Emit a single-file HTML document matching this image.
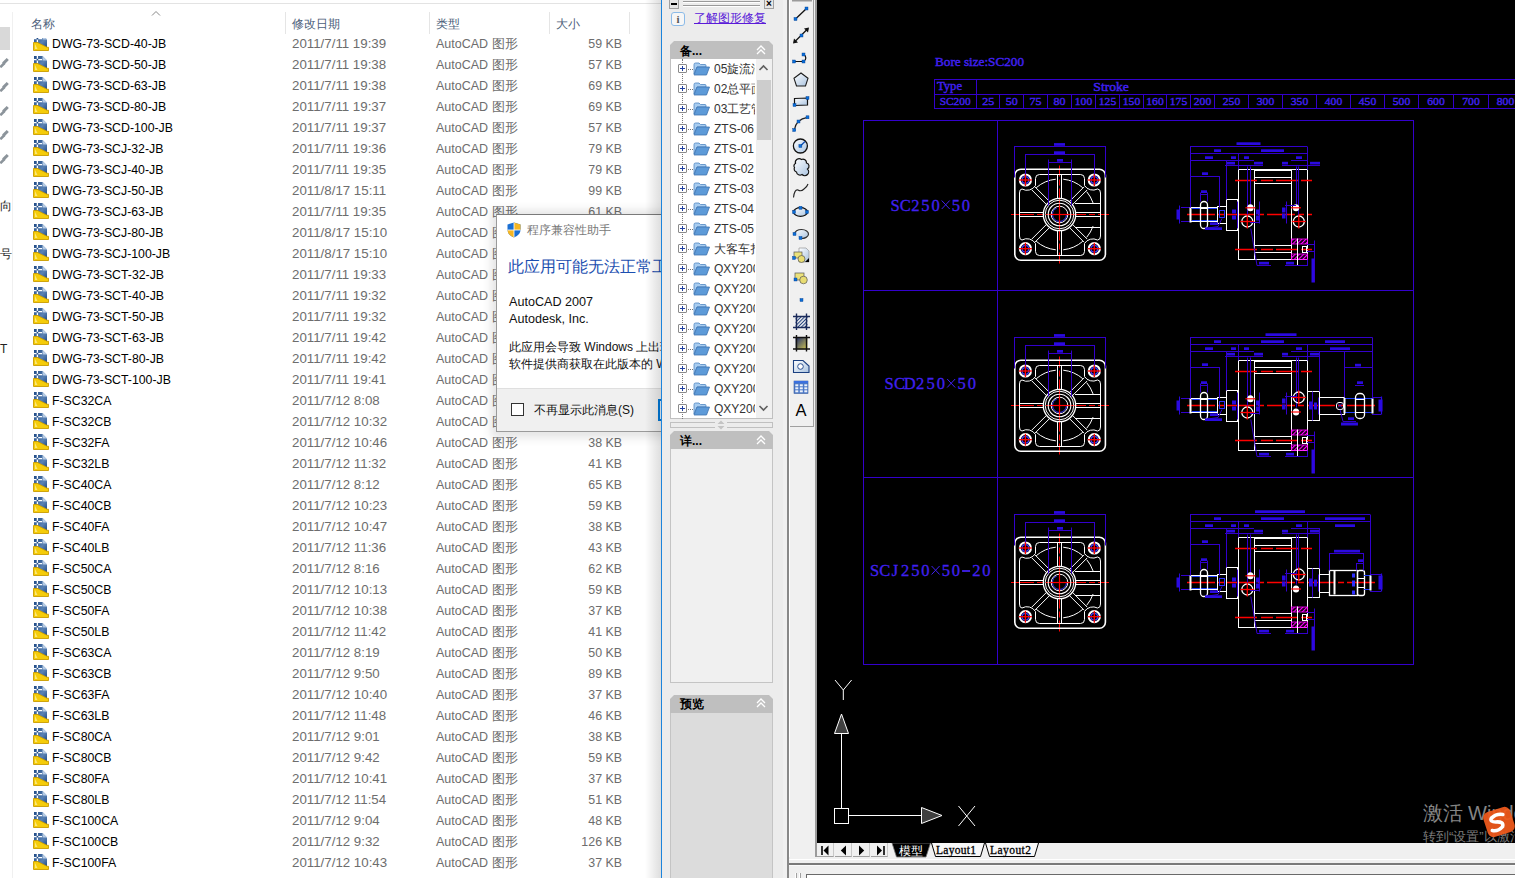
<!DOCTYPE html>
<html><head><meta charset="utf-8"><title>AutoCAD</title>
<style>
*{margin:0;padding:0;box-sizing:border-box}
html,body{width:1515px;height:878px;overflow:hidden;background:#fff;font-family:"Liberation Sans",sans-serif}
.a{position:absolute}
.row{position:absolute;left:0;width:661px;height:21px;font-size:12.3px;line-height:21px;white-space:nowrap}
.row .n{position:absolute;left:52px;color:#000}
.row .d{position:absolute;top:-1px;left:292px;color:#6d6d6d;font-size:13.3px}
.row .t{position:absolute;top:-0.5px;left:436px;color:#6d6d6d;font-size:12.5px}
.row .s{position:absolute;top:-0.5px;right:39px;color:#6d6d6d;font-size:12.4px}
.row svg{position:absolute;left:33px;top:1px}
.hdr{position:absolute;top:16px;font-size:12.3px;color:#4c607a}
.tree{position:absolute;left:671px;width:85px;height:20px;font-size:12px;line-height:20px;color:#333;white-space:nowrap;overflow:hidden}
.tb{position:absolute;left:792px;width:18px;height:18px}
</style></head><body>
<div class="a" style="left:0;top:0;width:661px;height:878px;background:#fff;overflow:hidden"><div class="a" style="left:0;top:3px;width:661px;height:1px;background:#e3e3e3"></div><div class="a" style="left:0;top:27px;width:10px;height:23px;background:#d9d9d9"></div><div class="a" style="left:12px;top:12px;width:1px;height:866px;background:#f0f0f0"></div><svg class="a" style="left:0;top:57.5px" width="9" height="10" viewBox="0 0 9 10"><path d="M0.3 9.2 L4.5 5" stroke="#8c949b" stroke-width="2.6"/><rect x="2.2" y="1.8" width="6.5" height="3" fill="#8c949b" transform="rotate(-45 5.5 3.3)"/></svg><svg class="a" style="left:0;top:81.5px" width="9" height="10" viewBox="0 0 9 10"><path d="M0.3 9.2 L4.5 5" stroke="#8c949b" stroke-width="2.6"/><rect x="2.2" y="1.8" width="6.5" height="3" fill="#8c949b" transform="rotate(-45 5.5 3.3)"/></svg><svg class="a" style="left:0;top:105.5px" width="9" height="10" viewBox="0 0 9 10"><path d="M0.3 9.2 L4.5 5" stroke="#8c949b" stroke-width="2.6"/><rect x="2.2" y="1.8" width="6.5" height="3" fill="#8c949b" transform="rotate(-45 5.5 3.3)"/></svg><svg class="a" style="left:0;top:129.5px" width="9" height="10" viewBox="0 0 9 10"><path d="M0.3 9.2 L4.5 5" stroke="#8c949b" stroke-width="2.6"/><rect x="2.2" y="1.8" width="6.5" height="3" fill="#8c949b" transform="rotate(-45 5.5 3.3)"/></svg><svg class="a" style="left:0;top:153.5px" width="9" height="10" viewBox="0 0 9 10"><path d="M0.3 9.2 L4.5 5" stroke="#8c949b" stroke-width="2.6"/><rect x="2.2" y="1.8" width="6.5" height="3" fill="#8c949b" transform="rotate(-45 5.5 3.3)"/></svg><div class="a" style="left:0;top:198px;font-size:12px;color:#222;">&#21521;</div><div class="a" style="left:0;top:246px;font-size:12px;color:#222;">&#21495;</div><div class="a" style="left:0;top:342px;font-size:12px;color:#222;">T</div><div class="hdr" style="left:31px">名称</div><div class="hdr" style="left:292px">修改日期</div><div class="hdr" style="left:436px">类型</div><div class="hdr" style="left:556px">大小</div><svg class="a" style="left:151px;top:10px" width="10" height="7"><path d="M1 5.5 L5 1.5 L9 5.5" stroke="#888" fill="none"/></svg><div class="a" style="left:285px;top:12px;width:1px;height:22px;background:#e5e5e5"></div><div class="a" style="left:429px;top:12px;width:1px;height:22px;background:#e5e5e5"></div><div class="a" style="left:549px;top:12px;width:1px;height:22px;background:#e5e5e5"></div><div class="a" style="left:629px;top:12px;width:1px;height:22px;background:#e5e5e5"></div><div class="a" style="left:0;top:38px;width:661px;height:840px;overflow:hidden"><div class="row" style="top:-4px"><svg width="16" height="16" viewBox="0 0 16 16"><defs><linearGradient id="dg" x1="0" y1="0" x2="1" y2="1"><stop offset="0" stop-color="#1f4a86"/><stop offset="0.6" stop-color="#5a82b4"/><stop offset="1" stop-color="#1f4a86"/></linearGradient></defs><path d="M1 0 L9.5 0 L14 4.5 L14 12.5 L1 12.5 Z" fill="url(#dg)"/><path d="M9.5 0 L9.5 4.5 L14 4.5 Z" fill="#b8cce4"/><path d="M0.5 3.7 H9 M4.4 0 V7" stroke="#fff" stroke-width="1.3"/><circle cx="4.4" cy="3.7" r="0.9" fill="#1f4a86"/><path d="M0.5 7.5 L4.5 7.5 L14 12.3 L15.5 12.3 L15.5 15.5 L0.5 15.5 Z" fill="#f5cc0a" stroke="#c99c00" stroke-width="0.9"/><path d="M2 9 L2 14 L4.5 14 Z" fill="#fff8c0" opacity="0.6"/></svg><span class="n">DWG-73-SCD-40-JB</span><span class="d">2011/7/11 19:39</span><span class="t">AutoCAD 图形</span><span class="s">59 KB</span></div><div class="row" style="top:17px"><svg width="16" height="16" viewBox="0 0 16 16"><defs><linearGradient id="dg" x1="0" y1="0" x2="1" y2="1"><stop offset="0" stop-color="#1f4a86"/><stop offset="0.6" stop-color="#5a82b4"/><stop offset="1" stop-color="#1f4a86"/></linearGradient></defs><path d="M1 0 L9.5 0 L14 4.5 L14 12.5 L1 12.5 Z" fill="url(#dg)"/><path d="M9.5 0 L9.5 4.5 L14 4.5 Z" fill="#b8cce4"/><path d="M0.5 3.7 H9 M4.4 0 V7" stroke="#fff" stroke-width="1.3"/><circle cx="4.4" cy="3.7" r="0.9" fill="#1f4a86"/><path d="M0.5 7.5 L4.5 7.5 L14 12.3 L15.5 12.3 L15.5 15.5 L0.5 15.5 Z" fill="#f5cc0a" stroke="#c99c00" stroke-width="0.9"/><path d="M2 9 L2 14 L4.5 14 Z" fill="#fff8c0" opacity="0.6"/></svg><span class="n">DWG-73-SCD-50-JB</span><span class="d">2011/7/11 19:38</span><span class="t">AutoCAD 图形</span><span class="s">57 KB</span></div><div class="row" style="top:38px"><svg width="16" height="16" viewBox="0 0 16 16"><defs><linearGradient id="dg" x1="0" y1="0" x2="1" y2="1"><stop offset="0" stop-color="#1f4a86"/><stop offset="0.6" stop-color="#5a82b4"/><stop offset="1" stop-color="#1f4a86"/></linearGradient></defs><path d="M1 0 L9.5 0 L14 4.5 L14 12.5 L1 12.5 Z" fill="url(#dg)"/><path d="M9.5 0 L9.5 4.5 L14 4.5 Z" fill="#b8cce4"/><path d="M0.5 3.7 H9 M4.4 0 V7" stroke="#fff" stroke-width="1.3"/><circle cx="4.4" cy="3.7" r="0.9" fill="#1f4a86"/><path d="M0.5 7.5 L4.5 7.5 L14 12.3 L15.5 12.3 L15.5 15.5 L0.5 15.5 Z" fill="#f5cc0a" stroke="#c99c00" stroke-width="0.9"/><path d="M2 9 L2 14 L4.5 14 Z" fill="#fff8c0" opacity="0.6"/></svg><span class="n">DWG-73-SCD-63-JB</span><span class="d">2011/7/11 19:38</span><span class="t">AutoCAD 图形</span><span class="s">69 KB</span></div><div class="row" style="top:59px"><svg width="16" height="16" viewBox="0 0 16 16"><defs><linearGradient id="dg" x1="0" y1="0" x2="1" y2="1"><stop offset="0" stop-color="#1f4a86"/><stop offset="0.6" stop-color="#5a82b4"/><stop offset="1" stop-color="#1f4a86"/></linearGradient></defs><path d="M1 0 L9.5 0 L14 4.5 L14 12.5 L1 12.5 Z" fill="url(#dg)"/><path d="M9.5 0 L9.5 4.5 L14 4.5 Z" fill="#b8cce4"/><path d="M0.5 3.7 H9 M4.4 0 V7" stroke="#fff" stroke-width="1.3"/><circle cx="4.4" cy="3.7" r="0.9" fill="#1f4a86"/><path d="M0.5 7.5 L4.5 7.5 L14 12.3 L15.5 12.3 L15.5 15.5 L0.5 15.5 Z" fill="#f5cc0a" stroke="#c99c00" stroke-width="0.9"/><path d="M2 9 L2 14 L4.5 14 Z" fill="#fff8c0" opacity="0.6"/></svg><span class="n">DWG-73-SCD-80-JB</span><span class="d">2011/7/11 19:37</span><span class="t">AutoCAD 图形</span><span class="s">69 KB</span></div><div class="row" style="top:80px"><svg width="16" height="16" viewBox="0 0 16 16"><defs><linearGradient id="dg" x1="0" y1="0" x2="1" y2="1"><stop offset="0" stop-color="#1f4a86"/><stop offset="0.6" stop-color="#5a82b4"/><stop offset="1" stop-color="#1f4a86"/></linearGradient></defs><path d="M1 0 L9.5 0 L14 4.5 L14 12.5 L1 12.5 Z" fill="url(#dg)"/><path d="M9.5 0 L9.5 4.5 L14 4.5 Z" fill="#b8cce4"/><path d="M0.5 3.7 H9 M4.4 0 V7" stroke="#fff" stroke-width="1.3"/><circle cx="4.4" cy="3.7" r="0.9" fill="#1f4a86"/><path d="M0.5 7.5 L4.5 7.5 L14 12.3 L15.5 12.3 L15.5 15.5 L0.5 15.5 Z" fill="#f5cc0a" stroke="#c99c00" stroke-width="0.9"/><path d="M2 9 L2 14 L4.5 14 Z" fill="#fff8c0" opacity="0.6"/></svg><span class="n">DWG-73-SCD-100-JB</span><span class="d">2011/7/11 19:37</span><span class="t">AutoCAD 图形</span><span class="s">57 KB</span></div><div class="row" style="top:101px"><svg width="16" height="16" viewBox="0 0 16 16"><defs><linearGradient id="dg" x1="0" y1="0" x2="1" y2="1"><stop offset="0" stop-color="#1f4a86"/><stop offset="0.6" stop-color="#5a82b4"/><stop offset="1" stop-color="#1f4a86"/></linearGradient></defs><path d="M1 0 L9.5 0 L14 4.5 L14 12.5 L1 12.5 Z" fill="url(#dg)"/><path d="M9.5 0 L9.5 4.5 L14 4.5 Z" fill="#b8cce4"/><path d="M0.5 3.7 H9 M4.4 0 V7" stroke="#fff" stroke-width="1.3"/><circle cx="4.4" cy="3.7" r="0.9" fill="#1f4a86"/><path d="M0.5 7.5 L4.5 7.5 L14 12.3 L15.5 12.3 L15.5 15.5 L0.5 15.5 Z" fill="#f5cc0a" stroke="#c99c00" stroke-width="0.9"/><path d="M2 9 L2 14 L4.5 14 Z" fill="#fff8c0" opacity="0.6"/></svg><span class="n">DWG-73-SCJ-32-JB</span><span class="d">2011/7/11 19:36</span><span class="t">AutoCAD 图形</span><span class="s">79 KB</span></div><div class="row" style="top:122px"><svg width="16" height="16" viewBox="0 0 16 16"><defs><linearGradient id="dg" x1="0" y1="0" x2="1" y2="1"><stop offset="0" stop-color="#1f4a86"/><stop offset="0.6" stop-color="#5a82b4"/><stop offset="1" stop-color="#1f4a86"/></linearGradient></defs><path d="M1 0 L9.5 0 L14 4.5 L14 12.5 L1 12.5 Z" fill="url(#dg)"/><path d="M9.5 0 L9.5 4.5 L14 4.5 Z" fill="#b8cce4"/><path d="M0.5 3.7 H9 M4.4 0 V7" stroke="#fff" stroke-width="1.3"/><circle cx="4.4" cy="3.7" r="0.9" fill="#1f4a86"/><path d="M0.5 7.5 L4.5 7.5 L14 12.3 L15.5 12.3 L15.5 15.5 L0.5 15.5 Z" fill="#f5cc0a" stroke="#c99c00" stroke-width="0.9"/><path d="M2 9 L2 14 L4.5 14 Z" fill="#fff8c0" opacity="0.6"/></svg><span class="n">DWG-73-SCJ-40-JB</span><span class="d">2011/7/11 19:35</span><span class="t">AutoCAD 图形</span><span class="s">79 KB</span></div><div class="row" style="top:143px"><svg width="16" height="16" viewBox="0 0 16 16"><defs><linearGradient id="dg" x1="0" y1="0" x2="1" y2="1"><stop offset="0" stop-color="#1f4a86"/><stop offset="0.6" stop-color="#5a82b4"/><stop offset="1" stop-color="#1f4a86"/></linearGradient></defs><path d="M1 0 L9.5 0 L14 4.5 L14 12.5 L1 12.5 Z" fill="url(#dg)"/><path d="M9.5 0 L9.5 4.5 L14 4.5 Z" fill="#b8cce4"/><path d="M0.5 3.7 H9 M4.4 0 V7" stroke="#fff" stroke-width="1.3"/><circle cx="4.4" cy="3.7" r="0.9" fill="#1f4a86"/><path d="M0.5 7.5 L4.5 7.5 L14 12.3 L15.5 12.3 L15.5 15.5 L0.5 15.5 Z" fill="#f5cc0a" stroke="#c99c00" stroke-width="0.9"/><path d="M2 9 L2 14 L4.5 14 Z" fill="#fff8c0" opacity="0.6"/></svg><span class="n">DWG-73-SCJ-50-JB</span><span class="d">2011/8/17 15:11</span><span class="t">AutoCAD 图形</span><span class="s">99 KB</span></div><div class="row" style="top:164px"><svg width="16" height="16" viewBox="0 0 16 16"><defs><linearGradient id="dg" x1="0" y1="0" x2="1" y2="1"><stop offset="0" stop-color="#1f4a86"/><stop offset="0.6" stop-color="#5a82b4"/><stop offset="1" stop-color="#1f4a86"/></linearGradient></defs><path d="M1 0 L9.5 0 L14 4.5 L14 12.5 L1 12.5 Z" fill="url(#dg)"/><path d="M9.5 0 L9.5 4.5 L14 4.5 Z" fill="#b8cce4"/><path d="M0.5 3.7 H9 M4.4 0 V7" stroke="#fff" stroke-width="1.3"/><circle cx="4.4" cy="3.7" r="0.9" fill="#1f4a86"/><path d="M0.5 7.5 L4.5 7.5 L14 12.3 L15.5 12.3 L15.5 15.5 L0.5 15.5 Z" fill="#f5cc0a" stroke="#c99c00" stroke-width="0.9"/><path d="M2 9 L2 14 L4.5 14 Z" fill="#fff8c0" opacity="0.6"/></svg><span class="n">DWG-73-SCJ-63-JB</span><span class="d">2011/7/11 19:35</span><span class="t">AutoCAD 图形</span><span class="s">61 KB</span></div><div class="row" style="top:185px"><svg width="16" height="16" viewBox="0 0 16 16"><defs><linearGradient id="dg" x1="0" y1="0" x2="1" y2="1"><stop offset="0" stop-color="#1f4a86"/><stop offset="0.6" stop-color="#5a82b4"/><stop offset="1" stop-color="#1f4a86"/></linearGradient></defs><path d="M1 0 L9.5 0 L14 4.5 L14 12.5 L1 12.5 Z" fill="url(#dg)"/><path d="M9.5 0 L9.5 4.5 L14 4.5 Z" fill="#b8cce4"/><path d="M0.5 3.7 H9 M4.4 0 V7" stroke="#fff" stroke-width="1.3"/><circle cx="4.4" cy="3.7" r="0.9" fill="#1f4a86"/><path d="M0.5 7.5 L4.5 7.5 L14 12.3 L15.5 12.3 L15.5 15.5 L0.5 15.5 Z" fill="#f5cc0a" stroke="#c99c00" stroke-width="0.9"/><path d="M2 9 L2 14 L4.5 14 Z" fill="#fff8c0" opacity="0.6"/></svg><span class="n">DWG-73-SCJ-80-JB</span><span class="d">2011/8/17 15:10</span><span class="t">AutoCAD 图形</span><span class="s">61 KB</span></div><div class="row" style="top:206px"><svg width="16" height="16" viewBox="0 0 16 16"><defs><linearGradient id="dg" x1="0" y1="0" x2="1" y2="1"><stop offset="0" stop-color="#1f4a86"/><stop offset="0.6" stop-color="#5a82b4"/><stop offset="1" stop-color="#1f4a86"/></linearGradient></defs><path d="M1 0 L9.5 0 L14 4.5 L14 12.5 L1 12.5 Z" fill="url(#dg)"/><path d="M9.5 0 L9.5 4.5 L14 4.5 Z" fill="#b8cce4"/><path d="M0.5 3.7 H9 M4.4 0 V7" stroke="#fff" stroke-width="1.3"/><circle cx="4.4" cy="3.7" r="0.9" fill="#1f4a86"/><path d="M0.5 7.5 L4.5 7.5 L14 12.3 L15.5 12.3 L15.5 15.5 L0.5 15.5 Z" fill="#f5cc0a" stroke="#c99c00" stroke-width="0.9"/><path d="M2 9 L2 14 L4.5 14 Z" fill="#fff8c0" opacity="0.6"/></svg><span class="n">DWG-73-SCJ-100-JB</span><span class="d">2011/8/17 15:10</span><span class="t">AutoCAD 图形</span><span class="s">59 KB</span></div><div class="row" style="top:227px"><svg width="16" height="16" viewBox="0 0 16 16"><defs><linearGradient id="dg" x1="0" y1="0" x2="1" y2="1"><stop offset="0" stop-color="#1f4a86"/><stop offset="0.6" stop-color="#5a82b4"/><stop offset="1" stop-color="#1f4a86"/></linearGradient></defs><path d="M1 0 L9.5 0 L14 4.5 L14 12.5 L1 12.5 Z" fill="url(#dg)"/><path d="M9.5 0 L9.5 4.5 L14 4.5 Z" fill="#b8cce4"/><path d="M0.5 3.7 H9 M4.4 0 V7" stroke="#fff" stroke-width="1.3"/><circle cx="4.4" cy="3.7" r="0.9" fill="#1f4a86"/><path d="M0.5 7.5 L4.5 7.5 L14 12.3 L15.5 12.3 L15.5 15.5 L0.5 15.5 Z" fill="#f5cc0a" stroke="#c99c00" stroke-width="0.9"/><path d="M2 9 L2 14 L4.5 14 Z" fill="#fff8c0" opacity="0.6"/></svg><span class="n">DWG-73-SCT-32-JB</span><span class="d">2011/7/11 19:33</span><span class="t">AutoCAD 图形</span><span class="s">59 KB</span></div><div class="row" style="top:248px"><svg width="16" height="16" viewBox="0 0 16 16"><defs><linearGradient id="dg" x1="0" y1="0" x2="1" y2="1"><stop offset="0" stop-color="#1f4a86"/><stop offset="0.6" stop-color="#5a82b4"/><stop offset="1" stop-color="#1f4a86"/></linearGradient></defs><path d="M1 0 L9.5 0 L14 4.5 L14 12.5 L1 12.5 Z" fill="url(#dg)"/><path d="M9.5 0 L9.5 4.5 L14 4.5 Z" fill="#b8cce4"/><path d="M0.5 3.7 H9 M4.4 0 V7" stroke="#fff" stroke-width="1.3"/><circle cx="4.4" cy="3.7" r="0.9" fill="#1f4a86"/><path d="M0.5 7.5 L4.5 7.5 L14 12.3 L15.5 12.3 L15.5 15.5 L0.5 15.5 Z" fill="#f5cc0a" stroke="#c99c00" stroke-width="0.9"/><path d="M2 9 L2 14 L4.5 14 Z" fill="#fff8c0" opacity="0.6"/></svg><span class="n">DWG-73-SCT-40-JB</span><span class="d">2011/7/11 19:32</span><span class="t">AutoCAD 图形</span><span class="s">59 KB</span></div><div class="row" style="top:269px"><svg width="16" height="16" viewBox="0 0 16 16"><defs><linearGradient id="dg" x1="0" y1="0" x2="1" y2="1"><stop offset="0" stop-color="#1f4a86"/><stop offset="0.6" stop-color="#5a82b4"/><stop offset="1" stop-color="#1f4a86"/></linearGradient></defs><path d="M1 0 L9.5 0 L14 4.5 L14 12.5 L1 12.5 Z" fill="url(#dg)"/><path d="M9.5 0 L9.5 4.5 L14 4.5 Z" fill="#b8cce4"/><path d="M0.5 3.7 H9 M4.4 0 V7" stroke="#fff" stroke-width="1.3"/><circle cx="4.4" cy="3.7" r="0.9" fill="#1f4a86"/><path d="M0.5 7.5 L4.5 7.5 L14 12.3 L15.5 12.3 L15.5 15.5 L0.5 15.5 Z" fill="#f5cc0a" stroke="#c99c00" stroke-width="0.9"/><path d="M2 9 L2 14 L4.5 14 Z" fill="#fff8c0" opacity="0.6"/></svg><span class="n">DWG-73-SCT-50-JB</span><span class="d">2011/7/11 19:32</span><span class="t">AutoCAD 图形</span><span class="s">59 KB</span></div><div class="row" style="top:290px"><svg width="16" height="16" viewBox="0 0 16 16"><defs><linearGradient id="dg" x1="0" y1="0" x2="1" y2="1"><stop offset="0" stop-color="#1f4a86"/><stop offset="0.6" stop-color="#5a82b4"/><stop offset="1" stop-color="#1f4a86"/></linearGradient></defs><path d="M1 0 L9.5 0 L14 4.5 L14 12.5 L1 12.5 Z" fill="url(#dg)"/><path d="M9.5 0 L9.5 4.5 L14 4.5 Z" fill="#b8cce4"/><path d="M0.5 3.7 H9 M4.4 0 V7" stroke="#fff" stroke-width="1.3"/><circle cx="4.4" cy="3.7" r="0.9" fill="#1f4a86"/><path d="M0.5 7.5 L4.5 7.5 L14 12.3 L15.5 12.3 L15.5 15.5 L0.5 15.5 Z" fill="#f5cc0a" stroke="#c99c00" stroke-width="0.9"/><path d="M2 9 L2 14 L4.5 14 Z" fill="#fff8c0" opacity="0.6"/></svg><span class="n">DWG-73-SCT-63-JB</span><span class="d">2011/7/11 19:42</span><span class="t">AutoCAD 图形</span><span class="s">59 KB</span></div><div class="row" style="top:311px"><svg width="16" height="16" viewBox="0 0 16 16"><defs><linearGradient id="dg" x1="0" y1="0" x2="1" y2="1"><stop offset="0" stop-color="#1f4a86"/><stop offset="0.6" stop-color="#5a82b4"/><stop offset="1" stop-color="#1f4a86"/></linearGradient></defs><path d="M1 0 L9.5 0 L14 4.5 L14 12.5 L1 12.5 Z" fill="url(#dg)"/><path d="M9.5 0 L9.5 4.5 L14 4.5 Z" fill="#b8cce4"/><path d="M0.5 3.7 H9 M4.4 0 V7" stroke="#fff" stroke-width="1.3"/><circle cx="4.4" cy="3.7" r="0.9" fill="#1f4a86"/><path d="M0.5 7.5 L4.5 7.5 L14 12.3 L15.5 12.3 L15.5 15.5 L0.5 15.5 Z" fill="#f5cc0a" stroke="#c99c00" stroke-width="0.9"/><path d="M2 9 L2 14 L4.5 14 Z" fill="#fff8c0" opacity="0.6"/></svg><span class="n">DWG-73-SCT-80-JB</span><span class="d">2011/7/11 19:42</span><span class="t">AutoCAD 图形</span><span class="s">59 KB</span></div><div class="row" style="top:332px"><svg width="16" height="16" viewBox="0 0 16 16"><defs><linearGradient id="dg" x1="0" y1="0" x2="1" y2="1"><stop offset="0" stop-color="#1f4a86"/><stop offset="0.6" stop-color="#5a82b4"/><stop offset="1" stop-color="#1f4a86"/></linearGradient></defs><path d="M1 0 L9.5 0 L14 4.5 L14 12.5 L1 12.5 Z" fill="url(#dg)"/><path d="M9.5 0 L9.5 4.5 L14 4.5 Z" fill="#b8cce4"/><path d="M0.5 3.7 H9 M4.4 0 V7" stroke="#fff" stroke-width="1.3"/><circle cx="4.4" cy="3.7" r="0.9" fill="#1f4a86"/><path d="M0.5 7.5 L4.5 7.5 L14 12.3 L15.5 12.3 L15.5 15.5 L0.5 15.5 Z" fill="#f5cc0a" stroke="#c99c00" stroke-width="0.9"/><path d="M2 9 L2 14 L4.5 14 Z" fill="#fff8c0" opacity="0.6"/></svg><span class="n">DWG-73-SCT-100-JB</span><span class="d">2011/7/11 19:41</span><span class="t">AutoCAD 图形</span><span class="s">59 KB</span></div><div class="row" style="top:353px"><svg width="16" height="16" viewBox="0 0 16 16"><defs><linearGradient id="dg" x1="0" y1="0" x2="1" y2="1"><stop offset="0" stop-color="#1f4a86"/><stop offset="0.6" stop-color="#5a82b4"/><stop offset="1" stop-color="#1f4a86"/></linearGradient></defs><path d="M1 0 L9.5 0 L14 4.5 L14 12.5 L1 12.5 Z" fill="url(#dg)"/><path d="M9.5 0 L9.5 4.5 L14 4.5 Z" fill="#b8cce4"/><path d="M0.5 3.7 H9 M4.4 0 V7" stroke="#fff" stroke-width="1.3"/><circle cx="4.4" cy="3.7" r="0.9" fill="#1f4a86"/><path d="M0.5 7.5 L4.5 7.5 L14 12.3 L15.5 12.3 L15.5 15.5 L0.5 15.5 Z" fill="#f5cc0a" stroke="#c99c00" stroke-width="0.9"/><path d="M2 9 L2 14 L4.5 14 Z" fill="#fff8c0" opacity="0.6"/></svg><span class="n">F-SC32CA</span><span class="d">2011/7/12 8:08</span><span class="t">AutoCAD 图形</span><span class="s">59 KB</span></div><div class="row" style="top:374px"><svg width="16" height="16" viewBox="0 0 16 16"><defs><linearGradient id="dg" x1="0" y1="0" x2="1" y2="1"><stop offset="0" stop-color="#1f4a86"/><stop offset="0.6" stop-color="#5a82b4"/><stop offset="1" stop-color="#1f4a86"/></linearGradient></defs><path d="M1 0 L9.5 0 L14 4.5 L14 12.5 L1 12.5 Z" fill="url(#dg)"/><path d="M9.5 0 L9.5 4.5 L14 4.5 Z" fill="#b8cce4"/><path d="M0.5 3.7 H9 M4.4 0 V7" stroke="#fff" stroke-width="1.3"/><circle cx="4.4" cy="3.7" r="0.9" fill="#1f4a86"/><path d="M0.5 7.5 L4.5 7.5 L14 12.3 L15.5 12.3 L15.5 15.5 L0.5 15.5 Z" fill="#f5cc0a" stroke="#c99c00" stroke-width="0.9"/><path d="M2 9 L2 14 L4.5 14 Z" fill="#fff8c0" opacity="0.6"/></svg><span class="n">F-SC32CB</span><span class="d">2011/7/12 10:32</span><span class="t">AutoCAD 图形</span><span class="s">59 KB</span></div><div class="row" style="top:395px"><svg width="16" height="16" viewBox="0 0 16 16"><defs><linearGradient id="dg" x1="0" y1="0" x2="1" y2="1"><stop offset="0" stop-color="#1f4a86"/><stop offset="0.6" stop-color="#5a82b4"/><stop offset="1" stop-color="#1f4a86"/></linearGradient></defs><path d="M1 0 L9.5 0 L14 4.5 L14 12.5 L1 12.5 Z" fill="url(#dg)"/><path d="M9.5 0 L9.5 4.5 L14 4.5 Z" fill="#b8cce4"/><path d="M0.5 3.7 H9 M4.4 0 V7" stroke="#fff" stroke-width="1.3"/><circle cx="4.4" cy="3.7" r="0.9" fill="#1f4a86"/><path d="M0.5 7.5 L4.5 7.5 L14 12.3 L15.5 12.3 L15.5 15.5 L0.5 15.5 Z" fill="#f5cc0a" stroke="#c99c00" stroke-width="0.9"/><path d="M2 9 L2 14 L4.5 14 Z" fill="#fff8c0" opacity="0.6"/></svg><span class="n">F-SC32FA</span><span class="d">2011/7/12 10:46</span><span class="t">AutoCAD 图形</span><span class="s">38 KB</span></div><div class="row" style="top:416px"><svg width="16" height="16" viewBox="0 0 16 16"><defs><linearGradient id="dg" x1="0" y1="0" x2="1" y2="1"><stop offset="0" stop-color="#1f4a86"/><stop offset="0.6" stop-color="#5a82b4"/><stop offset="1" stop-color="#1f4a86"/></linearGradient></defs><path d="M1 0 L9.5 0 L14 4.5 L14 12.5 L1 12.5 Z" fill="url(#dg)"/><path d="M9.5 0 L9.5 4.5 L14 4.5 Z" fill="#b8cce4"/><path d="M0.5 3.7 H9 M4.4 0 V7" stroke="#fff" stroke-width="1.3"/><circle cx="4.4" cy="3.7" r="0.9" fill="#1f4a86"/><path d="M0.5 7.5 L4.5 7.5 L14 12.3 L15.5 12.3 L15.5 15.5 L0.5 15.5 Z" fill="#f5cc0a" stroke="#c99c00" stroke-width="0.9"/><path d="M2 9 L2 14 L4.5 14 Z" fill="#fff8c0" opacity="0.6"/></svg><span class="n">F-SC32LB</span><span class="d">2011/7/12 11:32</span><span class="t">AutoCAD 图形</span><span class="s">41 KB</span></div><div class="row" style="top:437px"><svg width="16" height="16" viewBox="0 0 16 16"><defs><linearGradient id="dg" x1="0" y1="0" x2="1" y2="1"><stop offset="0" stop-color="#1f4a86"/><stop offset="0.6" stop-color="#5a82b4"/><stop offset="1" stop-color="#1f4a86"/></linearGradient></defs><path d="M1 0 L9.5 0 L14 4.5 L14 12.5 L1 12.5 Z" fill="url(#dg)"/><path d="M9.5 0 L9.5 4.5 L14 4.5 Z" fill="#b8cce4"/><path d="M0.5 3.7 H9 M4.4 0 V7" stroke="#fff" stroke-width="1.3"/><circle cx="4.4" cy="3.7" r="0.9" fill="#1f4a86"/><path d="M0.5 7.5 L4.5 7.5 L14 12.3 L15.5 12.3 L15.5 15.5 L0.5 15.5 Z" fill="#f5cc0a" stroke="#c99c00" stroke-width="0.9"/><path d="M2 9 L2 14 L4.5 14 Z" fill="#fff8c0" opacity="0.6"/></svg><span class="n">F-SC40CA</span><span class="d">2011/7/12 8:12</span><span class="t">AutoCAD 图形</span><span class="s">65 KB</span></div><div class="row" style="top:458px"><svg width="16" height="16" viewBox="0 0 16 16"><defs><linearGradient id="dg" x1="0" y1="0" x2="1" y2="1"><stop offset="0" stop-color="#1f4a86"/><stop offset="0.6" stop-color="#5a82b4"/><stop offset="1" stop-color="#1f4a86"/></linearGradient></defs><path d="M1 0 L9.5 0 L14 4.5 L14 12.5 L1 12.5 Z" fill="url(#dg)"/><path d="M9.5 0 L9.5 4.5 L14 4.5 Z" fill="#b8cce4"/><path d="M0.5 3.7 H9 M4.4 0 V7" stroke="#fff" stroke-width="1.3"/><circle cx="4.4" cy="3.7" r="0.9" fill="#1f4a86"/><path d="M0.5 7.5 L4.5 7.5 L14 12.3 L15.5 12.3 L15.5 15.5 L0.5 15.5 Z" fill="#f5cc0a" stroke="#c99c00" stroke-width="0.9"/><path d="M2 9 L2 14 L4.5 14 Z" fill="#fff8c0" opacity="0.6"/></svg><span class="n">F-SC40CB</span><span class="d">2011/7/12 10:23</span><span class="t">AutoCAD 图形</span><span class="s">59 KB</span></div><div class="row" style="top:479px"><svg width="16" height="16" viewBox="0 0 16 16"><defs><linearGradient id="dg" x1="0" y1="0" x2="1" y2="1"><stop offset="0" stop-color="#1f4a86"/><stop offset="0.6" stop-color="#5a82b4"/><stop offset="1" stop-color="#1f4a86"/></linearGradient></defs><path d="M1 0 L9.5 0 L14 4.5 L14 12.5 L1 12.5 Z" fill="url(#dg)"/><path d="M9.5 0 L9.5 4.5 L14 4.5 Z" fill="#b8cce4"/><path d="M0.5 3.7 H9 M4.4 0 V7" stroke="#fff" stroke-width="1.3"/><circle cx="4.4" cy="3.7" r="0.9" fill="#1f4a86"/><path d="M0.5 7.5 L4.5 7.5 L14 12.3 L15.5 12.3 L15.5 15.5 L0.5 15.5 Z" fill="#f5cc0a" stroke="#c99c00" stroke-width="0.9"/><path d="M2 9 L2 14 L4.5 14 Z" fill="#fff8c0" opacity="0.6"/></svg><span class="n">F-SC40FA</span><span class="d">2011/7/12 10:47</span><span class="t">AutoCAD 图形</span><span class="s">38 KB</span></div><div class="row" style="top:500px"><svg width="16" height="16" viewBox="0 0 16 16"><defs><linearGradient id="dg" x1="0" y1="0" x2="1" y2="1"><stop offset="0" stop-color="#1f4a86"/><stop offset="0.6" stop-color="#5a82b4"/><stop offset="1" stop-color="#1f4a86"/></linearGradient></defs><path d="M1 0 L9.5 0 L14 4.5 L14 12.5 L1 12.5 Z" fill="url(#dg)"/><path d="M9.5 0 L9.5 4.5 L14 4.5 Z" fill="#b8cce4"/><path d="M0.5 3.7 H9 M4.4 0 V7" stroke="#fff" stroke-width="1.3"/><circle cx="4.4" cy="3.7" r="0.9" fill="#1f4a86"/><path d="M0.5 7.5 L4.5 7.5 L14 12.3 L15.5 12.3 L15.5 15.5 L0.5 15.5 Z" fill="#f5cc0a" stroke="#c99c00" stroke-width="0.9"/><path d="M2 9 L2 14 L4.5 14 Z" fill="#fff8c0" opacity="0.6"/></svg><span class="n">F-SC40LB</span><span class="d">2011/7/12 11:36</span><span class="t">AutoCAD 图形</span><span class="s">43 KB</span></div><div class="row" style="top:521px"><svg width="16" height="16" viewBox="0 0 16 16"><defs><linearGradient id="dg" x1="0" y1="0" x2="1" y2="1"><stop offset="0" stop-color="#1f4a86"/><stop offset="0.6" stop-color="#5a82b4"/><stop offset="1" stop-color="#1f4a86"/></linearGradient></defs><path d="M1 0 L9.5 0 L14 4.5 L14 12.5 L1 12.5 Z" fill="url(#dg)"/><path d="M9.5 0 L9.5 4.5 L14 4.5 Z" fill="#b8cce4"/><path d="M0.5 3.7 H9 M4.4 0 V7" stroke="#fff" stroke-width="1.3"/><circle cx="4.4" cy="3.7" r="0.9" fill="#1f4a86"/><path d="M0.5 7.5 L4.5 7.5 L14 12.3 L15.5 12.3 L15.5 15.5 L0.5 15.5 Z" fill="#f5cc0a" stroke="#c99c00" stroke-width="0.9"/><path d="M2 9 L2 14 L4.5 14 Z" fill="#fff8c0" opacity="0.6"/></svg><span class="n">F-SC50CA</span><span class="d">2011/7/12 8:16</span><span class="t">AutoCAD 图形</span><span class="s">62 KB</span></div><div class="row" style="top:542px"><svg width="16" height="16" viewBox="0 0 16 16"><defs><linearGradient id="dg" x1="0" y1="0" x2="1" y2="1"><stop offset="0" stop-color="#1f4a86"/><stop offset="0.6" stop-color="#5a82b4"/><stop offset="1" stop-color="#1f4a86"/></linearGradient></defs><path d="M1 0 L9.5 0 L14 4.5 L14 12.5 L1 12.5 Z" fill="url(#dg)"/><path d="M9.5 0 L9.5 4.5 L14 4.5 Z" fill="#b8cce4"/><path d="M0.5 3.7 H9 M4.4 0 V7" stroke="#fff" stroke-width="1.3"/><circle cx="4.4" cy="3.7" r="0.9" fill="#1f4a86"/><path d="M0.5 7.5 L4.5 7.5 L14 12.3 L15.5 12.3 L15.5 15.5 L0.5 15.5 Z" fill="#f5cc0a" stroke="#c99c00" stroke-width="0.9"/><path d="M2 9 L2 14 L4.5 14 Z" fill="#fff8c0" opacity="0.6"/></svg><span class="n">F-SC50CB</span><span class="d">2011/7/12 10:13</span><span class="t">AutoCAD 图形</span><span class="s">59 KB</span></div><div class="row" style="top:563px"><svg width="16" height="16" viewBox="0 0 16 16"><defs><linearGradient id="dg" x1="0" y1="0" x2="1" y2="1"><stop offset="0" stop-color="#1f4a86"/><stop offset="0.6" stop-color="#5a82b4"/><stop offset="1" stop-color="#1f4a86"/></linearGradient></defs><path d="M1 0 L9.5 0 L14 4.5 L14 12.5 L1 12.5 Z" fill="url(#dg)"/><path d="M9.5 0 L9.5 4.5 L14 4.5 Z" fill="#b8cce4"/><path d="M0.5 3.7 H9 M4.4 0 V7" stroke="#fff" stroke-width="1.3"/><circle cx="4.4" cy="3.7" r="0.9" fill="#1f4a86"/><path d="M0.5 7.5 L4.5 7.5 L14 12.3 L15.5 12.3 L15.5 15.5 L0.5 15.5 Z" fill="#f5cc0a" stroke="#c99c00" stroke-width="0.9"/><path d="M2 9 L2 14 L4.5 14 Z" fill="#fff8c0" opacity="0.6"/></svg><span class="n">F-SC50FA</span><span class="d">2011/7/12 10:38</span><span class="t">AutoCAD 图形</span><span class="s">37 KB</span></div><div class="row" style="top:584px"><svg width="16" height="16" viewBox="0 0 16 16"><defs><linearGradient id="dg" x1="0" y1="0" x2="1" y2="1"><stop offset="0" stop-color="#1f4a86"/><stop offset="0.6" stop-color="#5a82b4"/><stop offset="1" stop-color="#1f4a86"/></linearGradient></defs><path d="M1 0 L9.5 0 L14 4.5 L14 12.5 L1 12.5 Z" fill="url(#dg)"/><path d="M9.5 0 L9.5 4.5 L14 4.5 Z" fill="#b8cce4"/><path d="M0.5 3.7 H9 M4.4 0 V7" stroke="#fff" stroke-width="1.3"/><circle cx="4.4" cy="3.7" r="0.9" fill="#1f4a86"/><path d="M0.5 7.5 L4.5 7.5 L14 12.3 L15.5 12.3 L15.5 15.5 L0.5 15.5 Z" fill="#f5cc0a" stroke="#c99c00" stroke-width="0.9"/><path d="M2 9 L2 14 L4.5 14 Z" fill="#fff8c0" opacity="0.6"/></svg><span class="n">F-SC50LB</span><span class="d">2011/7/12 11:42</span><span class="t">AutoCAD 图形</span><span class="s">41 KB</span></div><div class="row" style="top:605px"><svg width="16" height="16" viewBox="0 0 16 16"><defs><linearGradient id="dg" x1="0" y1="0" x2="1" y2="1"><stop offset="0" stop-color="#1f4a86"/><stop offset="0.6" stop-color="#5a82b4"/><stop offset="1" stop-color="#1f4a86"/></linearGradient></defs><path d="M1 0 L9.5 0 L14 4.5 L14 12.5 L1 12.5 Z" fill="url(#dg)"/><path d="M9.5 0 L9.5 4.5 L14 4.5 Z" fill="#b8cce4"/><path d="M0.5 3.7 H9 M4.4 0 V7" stroke="#fff" stroke-width="1.3"/><circle cx="4.4" cy="3.7" r="0.9" fill="#1f4a86"/><path d="M0.5 7.5 L4.5 7.5 L14 12.3 L15.5 12.3 L15.5 15.5 L0.5 15.5 Z" fill="#f5cc0a" stroke="#c99c00" stroke-width="0.9"/><path d="M2 9 L2 14 L4.5 14 Z" fill="#fff8c0" opacity="0.6"/></svg><span class="n">F-SC63CA</span><span class="d">2011/7/12 8:19</span><span class="t">AutoCAD 图形</span><span class="s">50 KB</span></div><div class="row" style="top:626px"><svg width="16" height="16" viewBox="0 0 16 16"><defs><linearGradient id="dg" x1="0" y1="0" x2="1" y2="1"><stop offset="0" stop-color="#1f4a86"/><stop offset="0.6" stop-color="#5a82b4"/><stop offset="1" stop-color="#1f4a86"/></linearGradient></defs><path d="M1 0 L9.5 0 L14 4.5 L14 12.5 L1 12.5 Z" fill="url(#dg)"/><path d="M9.5 0 L9.5 4.5 L14 4.5 Z" fill="#b8cce4"/><path d="M0.5 3.7 H9 M4.4 0 V7" stroke="#fff" stroke-width="1.3"/><circle cx="4.4" cy="3.7" r="0.9" fill="#1f4a86"/><path d="M0.5 7.5 L4.5 7.5 L14 12.3 L15.5 12.3 L15.5 15.5 L0.5 15.5 Z" fill="#f5cc0a" stroke="#c99c00" stroke-width="0.9"/><path d="M2 9 L2 14 L4.5 14 Z" fill="#fff8c0" opacity="0.6"/></svg><span class="n">F-SC63CB</span><span class="d">2011/7/12 9:50</span><span class="t">AutoCAD 图形</span><span class="s">89 KB</span></div><div class="row" style="top:647px"><svg width="16" height="16" viewBox="0 0 16 16"><defs><linearGradient id="dg" x1="0" y1="0" x2="1" y2="1"><stop offset="0" stop-color="#1f4a86"/><stop offset="0.6" stop-color="#5a82b4"/><stop offset="1" stop-color="#1f4a86"/></linearGradient></defs><path d="M1 0 L9.5 0 L14 4.5 L14 12.5 L1 12.5 Z" fill="url(#dg)"/><path d="M9.5 0 L9.5 4.5 L14 4.5 Z" fill="#b8cce4"/><path d="M0.5 3.7 H9 M4.4 0 V7" stroke="#fff" stroke-width="1.3"/><circle cx="4.4" cy="3.7" r="0.9" fill="#1f4a86"/><path d="M0.5 7.5 L4.5 7.5 L14 12.3 L15.5 12.3 L15.5 15.5 L0.5 15.5 Z" fill="#f5cc0a" stroke="#c99c00" stroke-width="0.9"/><path d="M2 9 L2 14 L4.5 14 Z" fill="#fff8c0" opacity="0.6"/></svg><span class="n">F-SC63FA</span><span class="d">2011/7/12 10:40</span><span class="t">AutoCAD 图形</span><span class="s">37 KB</span></div><div class="row" style="top:668px"><svg width="16" height="16" viewBox="0 0 16 16"><defs><linearGradient id="dg" x1="0" y1="0" x2="1" y2="1"><stop offset="0" stop-color="#1f4a86"/><stop offset="0.6" stop-color="#5a82b4"/><stop offset="1" stop-color="#1f4a86"/></linearGradient></defs><path d="M1 0 L9.5 0 L14 4.5 L14 12.5 L1 12.5 Z" fill="url(#dg)"/><path d="M9.5 0 L9.5 4.5 L14 4.5 Z" fill="#b8cce4"/><path d="M0.5 3.7 H9 M4.4 0 V7" stroke="#fff" stroke-width="1.3"/><circle cx="4.4" cy="3.7" r="0.9" fill="#1f4a86"/><path d="M0.5 7.5 L4.5 7.5 L14 12.3 L15.5 12.3 L15.5 15.5 L0.5 15.5 Z" fill="#f5cc0a" stroke="#c99c00" stroke-width="0.9"/><path d="M2 9 L2 14 L4.5 14 Z" fill="#fff8c0" opacity="0.6"/></svg><span class="n">F-SC63LB</span><span class="d">2011/7/12 11:48</span><span class="t">AutoCAD 图形</span><span class="s">46 KB</span></div><div class="row" style="top:689px"><svg width="16" height="16" viewBox="0 0 16 16"><defs><linearGradient id="dg" x1="0" y1="0" x2="1" y2="1"><stop offset="0" stop-color="#1f4a86"/><stop offset="0.6" stop-color="#5a82b4"/><stop offset="1" stop-color="#1f4a86"/></linearGradient></defs><path d="M1 0 L9.5 0 L14 4.5 L14 12.5 L1 12.5 Z" fill="url(#dg)"/><path d="M9.5 0 L9.5 4.5 L14 4.5 Z" fill="#b8cce4"/><path d="M0.5 3.7 H9 M4.4 0 V7" stroke="#fff" stroke-width="1.3"/><circle cx="4.4" cy="3.7" r="0.9" fill="#1f4a86"/><path d="M0.5 7.5 L4.5 7.5 L14 12.3 L15.5 12.3 L15.5 15.5 L0.5 15.5 Z" fill="#f5cc0a" stroke="#c99c00" stroke-width="0.9"/><path d="M2 9 L2 14 L4.5 14 Z" fill="#fff8c0" opacity="0.6"/></svg><span class="n">F-SC80CA</span><span class="d">2011/7/12 9:01</span><span class="t">AutoCAD 图形</span><span class="s">38 KB</span></div><div class="row" style="top:710px"><svg width="16" height="16" viewBox="0 0 16 16"><defs><linearGradient id="dg" x1="0" y1="0" x2="1" y2="1"><stop offset="0" stop-color="#1f4a86"/><stop offset="0.6" stop-color="#5a82b4"/><stop offset="1" stop-color="#1f4a86"/></linearGradient></defs><path d="M1 0 L9.5 0 L14 4.5 L14 12.5 L1 12.5 Z" fill="url(#dg)"/><path d="M9.5 0 L9.5 4.5 L14 4.5 Z" fill="#b8cce4"/><path d="M0.5 3.7 H9 M4.4 0 V7" stroke="#fff" stroke-width="1.3"/><circle cx="4.4" cy="3.7" r="0.9" fill="#1f4a86"/><path d="M0.5 7.5 L4.5 7.5 L14 12.3 L15.5 12.3 L15.5 15.5 L0.5 15.5 Z" fill="#f5cc0a" stroke="#c99c00" stroke-width="0.9"/><path d="M2 9 L2 14 L4.5 14 Z" fill="#fff8c0" opacity="0.6"/></svg><span class="n">F-SC80CB</span><span class="d">2011/7/12 9:42</span><span class="t">AutoCAD 图形</span><span class="s">59 KB</span></div><div class="row" style="top:731px"><svg width="16" height="16" viewBox="0 0 16 16"><defs><linearGradient id="dg" x1="0" y1="0" x2="1" y2="1"><stop offset="0" stop-color="#1f4a86"/><stop offset="0.6" stop-color="#5a82b4"/><stop offset="1" stop-color="#1f4a86"/></linearGradient></defs><path d="M1 0 L9.5 0 L14 4.5 L14 12.5 L1 12.5 Z" fill="url(#dg)"/><path d="M9.5 0 L9.5 4.5 L14 4.5 Z" fill="#b8cce4"/><path d="M0.5 3.7 H9 M4.4 0 V7" stroke="#fff" stroke-width="1.3"/><circle cx="4.4" cy="3.7" r="0.9" fill="#1f4a86"/><path d="M0.5 7.5 L4.5 7.5 L14 12.3 L15.5 12.3 L15.5 15.5 L0.5 15.5 Z" fill="#f5cc0a" stroke="#c99c00" stroke-width="0.9"/><path d="M2 9 L2 14 L4.5 14 Z" fill="#fff8c0" opacity="0.6"/></svg><span class="n">F-SC80FA</span><span class="d">2011/7/12 10:41</span><span class="t">AutoCAD 图形</span><span class="s">37 KB</span></div><div class="row" style="top:752px"><svg width="16" height="16" viewBox="0 0 16 16"><defs><linearGradient id="dg" x1="0" y1="0" x2="1" y2="1"><stop offset="0" stop-color="#1f4a86"/><stop offset="0.6" stop-color="#5a82b4"/><stop offset="1" stop-color="#1f4a86"/></linearGradient></defs><path d="M1 0 L9.5 0 L14 4.5 L14 12.5 L1 12.5 Z" fill="url(#dg)"/><path d="M9.5 0 L9.5 4.5 L14 4.5 Z" fill="#b8cce4"/><path d="M0.5 3.7 H9 M4.4 0 V7" stroke="#fff" stroke-width="1.3"/><circle cx="4.4" cy="3.7" r="0.9" fill="#1f4a86"/><path d="M0.5 7.5 L4.5 7.5 L14 12.3 L15.5 12.3 L15.5 15.5 L0.5 15.5 Z" fill="#f5cc0a" stroke="#c99c00" stroke-width="0.9"/><path d="M2 9 L2 14 L4.5 14 Z" fill="#fff8c0" opacity="0.6"/></svg><span class="n">F-SC80LB</span><span class="d">2011/7/12 11:54</span><span class="t">AutoCAD 图形</span><span class="s">51 KB</span></div><div class="row" style="top:773px"><svg width="16" height="16" viewBox="0 0 16 16"><defs><linearGradient id="dg" x1="0" y1="0" x2="1" y2="1"><stop offset="0" stop-color="#1f4a86"/><stop offset="0.6" stop-color="#5a82b4"/><stop offset="1" stop-color="#1f4a86"/></linearGradient></defs><path d="M1 0 L9.5 0 L14 4.5 L14 12.5 L1 12.5 Z" fill="url(#dg)"/><path d="M9.5 0 L9.5 4.5 L14 4.5 Z" fill="#b8cce4"/><path d="M0.5 3.7 H9 M4.4 0 V7" stroke="#fff" stroke-width="1.3"/><circle cx="4.4" cy="3.7" r="0.9" fill="#1f4a86"/><path d="M0.5 7.5 L4.5 7.5 L14 12.3 L15.5 12.3 L15.5 15.5 L0.5 15.5 Z" fill="#f5cc0a" stroke="#c99c00" stroke-width="0.9"/><path d="M2 9 L2 14 L4.5 14 Z" fill="#fff8c0" opacity="0.6"/></svg><span class="n">F-SC100CA</span><span class="d">2011/7/12 9:04</span><span class="t">AutoCAD 图形</span><span class="s">48 KB</span></div><div class="row" style="top:794px"><svg width="16" height="16" viewBox="0 0 16 16"><defs><linearGradient id="dg" x1="0" y1="0" x2="1" y2="1"><stop offset="0" stop-color="#1f4a86"/><stop offset="0.6" stop-color="#5a82b4"/><stop offset="1" stop-color="#1f4a86"/></linearGradient></defs><path d="M1 0 L9.5 0 L14 4.5 L14 12.5 L1 12.5 Z" fill="url(#dg)"/><path d="M9.5 0 L9.5 4.5 L14 4.5 Z" fill="#b8cce4"/><path d="M0.5 3.7 H9 M4.4 0 V7" stroke="#fff" stroke-width="1.3"/><circle cx="4.4" cy="3.7" r="0.9" fill="#1f4a86"/><path d="M0.5 7.5 L4.5 7.5 L14 12.3 L15.5 12.3 L15.5 15.5 L0.5 15.5 Z" fill="#f5cc0a" stroke="#c99c00" stroke-width="0.9"/><path d="M2 9 L2 14 L4.5 14 Z" fill="#fff8c0" opacity="0.6"/></svg><span class="n">F-SC100CB</span><span class="d">2011/7/12 9:32</span><span class="t">AutoCAD 图形</span><span class="s">126 KB</span></div><div class="row" style="top:815px"><svg width="16" height="16" viewBox="0 0 16 16"><defs><linearGradient id="dg" x1="0" y1="0" x2="1" y2="1"><stop offset="0" stop-color="#1f4a86"/><stop offset="0.6" stop-color="#5a82b4"/><stop offset="1" stop-color="#1f4a86"/></linearGradient></defs><path d="M1 0 L9.5 0 L14 4.5 L14 12.5 L1 12.5 Z" fill="url(#dg)"/><path d="M9.5 0 L9.5 4.5 L14 4.5 Z" fill="#b8cce4"/><path d="M0.5 3.7 H9 M4.4 0 V7" stroke="#fff" stroke-width="1.3"/><circle cx="4.4" cy="3.7" r="0.9" fill="#1f4a86"/><path d="M0.5 7.5 L4.5 7.5 L14 12.3 L15.5 12.3 L15.5 15.5 L0.5 15.5 Z" fill="#f5cc0a" stroke="#c99c00" stroke-width="0.9"/><path d="M2 9 L2 14 L4.5 14 Z" fill="#fff8c0" opacity="0.6"/></svg><span class="n">F-SC100FA</span><span class="d">2011/7/12 10:43</span><span class="t">AutoCAD 图形</span><span class="s">37 KB</span></div></div></div><div class="a" style="left:491px;top:210px;width:180px;height:228px;background:rgba(0,0,0,0.10);filter:blur(4px)"></div>
<div class="a" style="left:496px;top:214px;width:170px;height:218px;background:#fff;border-top:1px solid #7a7a7a;border-left:1px solid #9a9a9a;border-bottom:1px solid #9a9a9a;overflow:hidden">
<svg class="a" style="left:10px;top:7px" width="14" height="16" viewBox="0 0 14 16"><path d="M7 0.5 L13.5 2.5 L13.5 8 Q13.5 13 7 15.5 Q0.5 13 0.5 8 L0.5 2.5 Z" fill="#1a6fd3"/><path d="M7 0.5 L13.5 2.5 L13.5 8 L7 8 Z M7 8 L0.5 8 Q0.5 13 7 15.5 Z" fill="#f6b622"/><path d="M7 0.5 V15.5 M0.5 8 H13.5" stroke="#fff" stroke-width="0.8"/></svg>
<div class="a" style="left:30px;top:7px;font-size:12px;color:#7a7a7a;white-space:nowrap">程序兼容性助手</div>
<div class="a" style="left:11px;top:42px;font-size:15.5px;color:#1c4fb0;white-space:nowrap">此应用可能无法正常工作</div>
<div class="a" style="left:12px;top:79px;font-size:12.6px;color:#111;white-space:nowrap;line-height:17px">AutoCAD 2007<br>Autodesk, Inc.</div>
<div class="a" style="left:12px;top:124px;font-size:12px;color:#111;white-space:nowrap;line-height:17px">此应用会导致 Windows 上出现<br>软件提供商获取在此版本的 Windows</div>
<div class="a" style="left:0;top:173px;width:170px;height:44px;background:#f0f0f0;border-top:1px solid #dfdfdf"></div>
<div class="a" style="left:14px;top:188px;width:13px;height:13px;border:1px solid #333;background:#fff"></div>
<div class="a" style="left:37px;top:187px;font-size:12px;color:#111;white-space:nowrap">不再显示此消息(S)</div>
<div class="a" style="left:161px;top:184px;width:20px;height:22px;border:2px solid #0078d7;background:#e5f1fb"></div>
</div>
<div class="a" style="left:661px;top:0;width:127px;height:878px;background:#ececec"></div><div class="a" style="left:645px;top:0;width:16px;height:878px;background:linear-gradient(to right,rgba(0,0,0,0),rgba(0,0,0,0.13))"></div><div class="a" style="left:661px;top:0;width:1px;height:878px;background:#1c84dc"></div><div class="a" style="left:669px;top:-1px;width:10px;height:10px;border:1px solid #a0a0a0;background:#e6e6e6"></div><div class="a" style="left:671px;top:3px;width:6px;height:2px;background:#000"></div><div class="a" style="left:683px;top:1px;width:77px;height:2px;border-top:1px solid #9a9a9a;border-bottom:1px solid #fff"></div><div class="a" style="left:683px;top:5px;width:77px;height:2px;border-top:1px solid #9a9a9a;border-bottom:1px solid #fff"></div><div class="a" style="left:764px;top:-1px;width:10px;height:10px;border:1px solid #a0a0a0;background:#e6e6e6;font:bold 10px/8px 'Liberation Sans';text-align:center;color:#000">×</div><div class="a" style="left:671px;top:12px;width:14px;height:14px;border:1px solid #8cbbe8;border-radius:3px;background:#f6f6f6;font:bold 11px/12px 'Liberation Serif';text-align:center;color:#555">i</div><div class="a" style="left:694px;top:10px;font-size:12px;color:#5a1ad8;text-decoration:underline;white-space:nowrap">了解图形修复</div><div class="a" style="left:670px;top:41px;width:103px;height:18px;background:#bfbfbf;clip-path:polygon(4px 0,99px 0,103px 4px,103px 18px,0 18px,0 4px)"></div><div class="a" style="left:680px;top:43px;font:bold 12px 'Liberation Sans';color:#000">备...</div><svg class="a" style="left:756px;top:45px" width="10" height="10"><path d="M1 5 L5 1 L9 5 M1 9 L5 5 L9 9" stroke="#fff" stroke-width="1.3" fill="none"/></svg><div class="a" style="left:670px;top:59px;width:103px;height:360px;background:#fff;border:1px solid #c0c0c0;border-top:none"></div><div class="a" style="left:756px;top:59px;width:16px;height:359px;background:#f0f0f0"></div><div class="a" style="left:757px;top:80px;width:14px;height:60px;background:#cdcdcd"></div><svg class="a" style="left:758px;top:64px" width="11" height="8"><path d="M1.5 6 L5.5 2 L9.5 6" stroke="#606060" stroke-width="1.6" fill="none"/></svg><svg class="a" style="left:758px;top:404px" width="11" height="8"><path d="M1.5 2 L5.5 6 L9.5 2" stroke="#606060" stroke-width="1.6" fill="none"/></svg><div class="a" style="left:682px;top:59px;width:0;height:360px;border-left:1px dotted #777"></div><div class="a" style="left:678px;top:64px;width:9px;height:9px;border:1px solid #8a8a8a;background:#fff;border-radius:1px"></div><div class="a" style="left:680px;top:68px;width:5px;height:1px;background:#1f3f9f"></div><div class="a" style="left:682px;top:66px;width:1px;height:5px;background:#1f3f9f"></div><div class="a" style="left:688px;top:69px;width:5px;border-top:1px dotted #777"></div><div class="a" style="left:693px;top:62px"><svg width="17" height="14" viewBox="0 0 17 14"><path d="M1 2.5 Q1 1 2.5 1 L6 1 L7.5 2.5 L12 2.5 Q13 2.5 13 3.5 L13 5 L4 5 L1 12 Z" fill="#a9cdf0" stroke="#4f86c2" stroke-width="0.8"/><path d="M4 5 L16.5 5 L13.5 13 L1 13 Z" fill="#5d9ad8" stroke="#3f74b0" stroke-width="0.8"/></svg></div><div class="tree" style="left:714px;top:59px;width:41px">05旋流油</div><div class="a" style="left:678px;top:84px;width:9px;height:9px;border:1px solid #8a8a8a;background:#fff;border-radius:1px"></div><div class="a" style="left:680px;top:88px;width:5px;height:1px;background:#1f3f9f"></div><div class="a" style="left:682px;top:86px;width:1px;height:5px;background:#1f3f9f"></div><div class="a" style="left:688px;top:89px;width:5px;border-top:1px dotted #777"></div><div class="a" style="left:693px;top:82px"><svg width="17" height="14" viewBox="0 0 17 14"><path d="M1 2.5 Q1 1 2.5 1 L6 1 L7.5 2.5 L12 2.5 Q13 2.5 13 3.5 L13 5 L4 5 L1 12 Z" fill="#a9cdf0" stroke="#4f86c2" stroke-width="0.8"/><path d="M4 5 L16.5 5 L13.5 13 L1 13 Z" fill="#5d9ad8" stroke="#3f74b0" stroke-width="0.8"/></svg></div><div class="tree" style="left:714px;top:79px;width:41px">02总平面</div><div class="a" style="left:678px;top:104px;width:9px;height:9px;border:1px solid #8a8a8a;background:#fff;border-radius:1px"></div><div class="a" style="left:680px;top:108px;width:5px;height:1px;background:#1f3f9f"></div><div class="a" style="left:682px;top:106px;width:1px;height:5px;background:#1f3f9f"></div><div class="a" style="left:688px;top:109px;width:5px;border-top:1px dotted #777"></div><div class="a" style="left:693px;top:102px"><svg width="17" height="14" viewBox="0 0 17 14"><path d="M1 2.5 Q1 1 2.5 1 L6 1 L7.5 2.5 L12 2.5 Q13 2.5 13 3.5 L13 5 L4 5 L1 12 Z" fill="#a9cdf0" stroke="#4f86c2" stroke-width="0.8"/><path d="M4 5 L16.5 5 L13.5 13 L1 13 Z" fill="#5d9ad8" stroke="#3f74b0" stroke-width="0.8"/></svg></div><div class="tree" style="left:714px;top:99px;width:41px">03工艺管</div><div class="a" style="left:678px;top:124px;width:9px;height:9px;border:1px solid #8a8a8a;background:#fff;border-radius:1px"></div><div class="a" style="left:680px;top:128px;width:5px;height:1px;background:#1f3f9f"></div><div class="a" style="left:682px;top:126px;width:1px;height:5px;background:#1f3f9f"></div><div class="a" style="left:688px;top:129px;width:5px;border-top:1px dotted #777"></div><div class="a" style="left:693px;top:122px"><svg width="17" height="14" viewBox="0 0 17 14"><path d="M1 2.5 Q1 1 2.5 1 L6 1 L7.5 2.5 L12 2.5 Q13 2.5 13 3.5 L13 5 L4 5 L1 12 Z" fill="#a9cdf0" stroke="#4f86c2" stroke-width="0.8"/><path d="M4 5 L16.5 5 L13.5 13 L1 13 Z" fill="#5d9ad8" stroke="#3f74b0" stroke-width="0.8"/></svg></div><div class="tree" style="left:714px;top:119px;width:41px">ZTS-06</div><div class="a" style="left:678px;top:144px;width:9px;height:9px;border:1px solid #8a8a8a;background:#fff;border-radius:1px"></div><div class="a" style="left:680px;top:148px;width:5px;height:1px;background:#1f3f9f"></div><div class="a" style="left:682px;top:146px;width:1px;height:5px;background:#1f3f9f"></div><div class="a" style="left:688px;top:149px;width:5px;border-top:1px dotted #777"></div><div class="a" style="left:693px;top:142px"><svg width="17" height="14" viewBox="0 0 17 14"><path d="M1 2.5 Q1 1 2.5 1 L6 1 L7.5 2.5 L12 2.5 Q13 2.5 13 3.5 L13 5 L4 5 L1 12 Z" fill="#a9cdf0" stroke="#4f86c2" stroke-width="0.8"/><path d="M4 5 L16.5 5 L13.5 13 L1 13 Z" fill="#5d9ad8" stroke="#3f74b0" stroke-width="0.8"/></svg></div><div class="tree" style="left:714px;top:139px;width:41px">ZTS-01</div><div class="a" style="left:678px;top:164px;width:9px;height:9px;border:1px solid #8a8a8a;background:#fff;border-radius:1px"></div><div class="a" style="left:680px;top:168px;width:5px;height:1px;background:#1f3f9f"></div><div class="a" style="left:682px;top:166px;width:1px;height:5px;background:#1f3f9f"></div><div class="a" style="left:688px;top:169px;width:5px;border-top:1px dotted #777"></div><div class="a" style="left:693px;top:162px"><svg width="17" height="14" viewBox="0 0 17 14"><path d="M1 2.5 Q1 1 2.5 1 L6 1 L7.5 2.5 L12 2.5 Q13 2.5 13 3.5 L13 5 L4 5 L1 12 Z" fill="#a9cdf0" stroke="#4f86c2" stroke-width="0.8"/><path d="M4 5 L16.5 5 L13.5 13 L1 13 Z" fill="#5d9ad8" stroke="#3f74b0" stroke-width="0.8"/></svg></div><div class="tree" style="left:714px;top:159px;width:41px">ZTS-02</div><div class="a" style="left:678px;top:184px;width:9px;height:9px;border:1px solid #8a8a8a;background:#fff;border-radius:1px"></div><div class="a" style="left:680px;top:188px;width:5px;height:1px;background:#1f3f9f"></div><div class="a" style="left:682px;top:186px;width:1px;height:5px;background:#1f3f9f"></div><div class="a" style="left:688px;top:189px;width:5px;border-top:1px dotted #777"></div><div class="a" style="left:693px;top:182px"><svg width="17" height="14" viewBox="0 0 17 14"><path d="M1 2.5 Q1 1 2.5 1 L6 1 L7.5 2.5 L12 2.5 Q13 2.5 13 3.5 L13 5 L4 5 L1 12 Z" fill="#a9cdf0" stroke="#4f86c2" stroke-width="0.8"/><path d="M4 5 L16.5 5 L13.5 13 L1 13 Z" fill="#5d9ad8" stroke="#3f74b0" stroke-width="0.8"/></svg></div><div class="tree" style="left:714px;top:179px;width:41px">ZTS-03</div><div class="a" style="left:678px;top:204px;width:9px;height:9px;border:1px solid #8a8a8a;background:#fff;border-radius:1px"></div><div class="a" style="left:680px;top:208px;width:5px;height:1px;background:#1f3f9f"></div><div class="a" style="left:682px;top:206px;width:1px;height:5px;background:#1f3f9f"></div><div class="a" style="left:688px;top:209px;width:5px;border-top:1px dotted #777"></div><div class="a" style="left:693px;top:202px"><svg width="17" height="14" viewBox="0 0 17 14"><path d="M1 2.5 Q1 1 2.5 1 L6 1 L7.5 2.5 L12 2.5 Q13 2.5 13 3.5 L13 5 L4 5 L1 12 Z" fill="#a9cdf0" stroke="#4f86c2" stroke-width="0.8"/><path d="M4 5 L16.5 5 L13.5 13 L1 13 Z" fill="#5d9ad8" stroke="#3f74b0" stroke-width="0.8"/></svg></div><div class="tree" style="left:714px;top:199px;width:41px">ZTS-04</div><div class="a" style="left:678px;top:224px;width:9px;height:9px;border:1px solid #8a8a8a;background:#fff;border-radius:1px"></div><div class="a" style="left:680px;top:228px;width:5px;height:1px;background:#1f3f9f"></div><div class="a" style="left:682px;top:226px;width:1px;height:5px;background:#1f3f9f"></div><div class="a" style="left:688px;top:229px;width:5px;border-top:1px dotted #777"></div><div class="a" style="left:693px;top:222px"><svg width="17" height="14" viewBox="0 0 17 14"><path d="M1 2.5 Q1 1 2.5 1 L6 1 L7.5 2.5 L12 2.5 Q13 2.5 13 3.5 L13 5 L4 5 L1 12 Z" fill="#a9cdf0" stroke="#4f86c2" stroke-width="0.8"/><path d="M4 5 L16.5 5 L13.5 13 L1 13 Z" fill="#5d9ad8" stroke="#3f74b0" stroke-width="0.8"/></svg></div><div class="tree" style="left:714px;top:219px;width:41px">ZTS-05</div><div class="a" style="left:678px;top:244px;width:9px;height:9px;border:1px solid #8a8a8a;background:#fff;border-radius:1px"></div><div class="a" style="left:680px;top:248px;width:5px;height:1px;background:#1f3f9f"></div><div class="a" style="left:682px;top:246px;width:1px;height:5px;background:#1f3f9f"></div><div class="a" style="left:688px;top:249px;width:5px;border-top:1px dotted #777"></div><div class="a" style="left:693px;top:242px"><svg width="17" height="14" viewBox="0 0 17 14"><path d="M1 2.5 Q1 1 2.5 1 L6 1 L7.5 2.5 L12 2.5 Q13 2.5 13 3.5 L13 5 L4 5 L1 12 Z" fill="#a9cdf0" stroke="#4f86c2" stroke-width="0.8"/><path d="M4 5 L16.5 5 L13.5 13 L1 13 Z" fill="#5d9ad8" stroke="#3f74b0" stroke-width="0.8"/></svg></div><div class="tree" style="left:714px;top:239px;width:41px">大客车扌</div><div class="a" style="left:678px;top:264px;width:9px;height:9px;border:1px solid #8a8a8a;background:#fff;border-radius:1px"></div><div class="a" style="left:680px;top:268px;width:5px;height:1px;background:#1f3f9f"></div><div class="a" style="left:682px;top:266px;width:1px;height:5px;background:#1f3f9f"></div><div class="a" style="left:688px;top:269px;width:5px;border-top:1px dotted #777"></div><div class="a" style="left:693px;top:262px"><svg width="17" height="14" viewBox="0 0 17 14"><path d="M1 2.5 Q1 1 2.5 1 L6 1 L7.5 2.5 L12 2.5 Q13 2.5 13 3.5 L13 5 L4 5 L1 12 Z" fill="#a9cdf0" stroke="#4f86c2" stroke-width="0.8"/><path d="M4 5 L16.5 5 L13.5 13 L1 13 Z" fill="#5d9ad8" stroke="#3f74b0" stroke-width="0.8"/></svg></div><div class="tree" style="left:714px;top:259px;width:41px">QXY200</div><div class="a" style="left:678px;top:284px;width:9px;height:9px;border:1px solid #8a8a8a;background:#fff;border-radius:1px"></div><div class="a" style="left:680px;top:288px;width:5px;height:1px;background:#1f3f9f"></div><div class="a" style="left:682px;top:286px;width:1px;height:5px;background:#1f3f9f"></div><div class="a" style="left:688px;top:289px;width:5px;border-top:1px dotted #777"></div><div class="a" style="left:693px;top:282px"><svg width="17" height="14" viewBox="0 0 17 14"><path d="M1 2.5 Q1 1 2.5 1 L6 1 L7.5 2.5 L12 2.5 Q13 2.5 13 3.5 L13 5 L4 5 L1 12 Z" fill="#a9cdf0" stroke="#4f86c2" stroke-width="0.8"/><path d="M4 5 L16.5 5 L13.5 13 L1 13 Z" fill="#5d9ad8" stroke="#3f74b0" stroke-width="0.8"/></svg></div><div class="tree" style="left:714px;top:279px;width:41px">QXY200</div><div class="a" style="left:678px;top:304px;width:9px;height:9px;border:1px solid #8a8a8a;background:#fff;border-radius:1px"></div><div class="a" style="left:680px;top:308px;width:5px;height:1px;background:#1f3f9f"></div><div class="a" style="left:682px;top:306px;width:1px;height:5px;background:#1f3f9f"></div><div class="a" style="left:688px;top:309px;width:5px;border-top:1px dotted #777"></div><div class="a" style="left:693px;top:302px"><svg width="17" height="14" viewBox="0 0 17 14"><path d="M1 2.5 Q1 1 2.5 1 L6 1 L7.5 2.5 L12 2.5 Q13 2.5 13 3.5 L13 5 L4 5 L1 12 Z" fill="#a9cdf0" stroke="#4f86c2" stroke-width="0.8"/><path d="M4 5 L16.5 5 L13.5 13 L1 13 Z" fill="#5d9ad8" stroke="#3f74b0" stroke-width="0.8"/></svg></div><div class="tree" style="left:714px;top:299px;width:41px">QXY200</div><div class="a" style="left:678px;top:324px;width:9px;height:9px;border:1px solid #8a8a8a;background:#fff;border-radius:1px"></div><div class="a" style="left:680px;top:328px;width:5px;height:1px;background:#1f3f9f"></div><div class="a" style="left:682px;top:326px;width:1px;height:5px;background:#1f3f9f"></div><div class="a" style="left:688px;top:329px;width:5px;border-top:1px dotted #777"></div><div class="a" style="left:693px;top:322px"><svg width="17" height="14" viewBox="0 0 17 14"><path d="M1 2.5 Q1 1 2.5 1 L6 1 L7.5 2.5 L12 2.5 Q13 2.5 13 3.5 L13 5 L4 5 L1 12 Z" fill="#a9cdf0" stroke="#4f86c2" stroke-width="0.8"/><path d="M4 5 L16.5 5 L13.5 13 L1 13 Z" fill="#5d9ad8" stroke="#3f74b0" stroke-width="0.8"/></svg></div><div class="tree" style="left:714px;top:319px;width:41px">QXY200</div><div class="a" style="left:678px;top:344px;width:9px;height:9px;border:1px solid #8a8a8a;background:#fff;border-radius:1px"></div><div class="a" style="left:680px;top:348px;width:5px;height:1px;background:#1f3f9f"></div><div class="a" style="left:682px;top:346px;width:1px;height:5px;background:#1f3f9f"></div><div class="a" style="left:688px;top:349px;width:5px;border-top:1px dotted #777"></div><div class="a" style="left:693px;top:342px"><svg width="17" height="14" viewBox="0 0 17 14"><path d="M1 2.5 Q1 1 2.5 1 L6 1 L7.5 2.5 L12 2.5 Q13 2.5 13 3.5 L13 5 L4 5 L1 12 Z" fill="#a9cdf0" stroke="#4f86c2" stroke-width="0.8"/><path d="M4 5 L16.5 5 L13.5 13 L1 13 Z" fill="#5d9ad8" stroke="#3f74b0" stroke-width="0.8"/></svg></div><div class="tree" style="left:714px;top:339px;width:41px">QXY200</div><div class="a" style="left:678px;top:364px;width:9px;height:9px;border:1px solid #8a8a8a;background:#fff;border-radius:1px"></div><div class="a" style="left:680px;top:368px;width:5px;height:1px;background:#1f3f9f"></div><div class="a" style="left:682px;top:366px;width:1px;height:5px;background:#1f3f9f"></div><div class="a" style="left:688px;top:369px;width:5px;border-top:1px dotted #777"></div><div class="a" style="left:693px;top:362px"><svg width="17" height="14" viewBox="0 0 17 14"><path d="M1 2.5 Q1 1 2.5 1 L6 1 L7.5 2.5 L12 2.5 Q13 2.5 13 3.5 L13 5 L4 5 L1 12 Z" fill="#a9cdf0" stroke="#4f86c2" stroke-width="0.8"/><path d="M4 5 L16.5 5 L13.5 13 L1 13 Z" fill="#5d9ad8" stroke="#3f74b0" stroke-width="0.8"/></svg></div><div class="tree" style="left:714px;top:359px;width:41px">QXY200</div><div class="a" style="left:678px;top:384px;width:9px;height:9px;border:1px solid #8a8a8a;background:#fff;border-radius:1px"></div><div class="a" style="left:680px;top:388px;width:5px;height:1px;background:#1f3f9f"></div><div class="a" style="left:682px;top:386px;width:1px;height:5px;background:#1f3f9f"></div><div class="a" style="left:688px;top:389px;width:5px;border-top:1px dotted #777"></div><div class="a" style="left:693px;top:382px"><svg width="17" height="14" viewBox="0 0 17 14"><path d="M1 2.5 Q1 1 2.5 1 L6 1 L7.5 2.5 L12 2.5 Q13 2.5 13 3.5 L13 5 L4 5 L1 12 Z" fill="#a9cdf0" stroke="#4f86c2" stroke-width="0.8"/><path d="M4 5 L16.5 5 L13.5 13 L1 13 Z" fill="#5d9ad8" stroke="#3f74b0" stroke-width="0.8"/></svg></div><div class="tree" style="left:714px;top:379px;width:41px">QXY200</div><div class="a" style="left:678px;top:404px;width:9px;height:9px;border:1px solid #8a8a8a;background:#fff;border-radius:1px"></div><div class="a" style="left:680px;top:408px;width:5px;height:1px;background:#1f3f9f"></div><div class="a" style="left:682px;top:406px;width:1px;height:5px;background:#1f3f9f"></div><div class="a" style="left:688px;top:409px;width:5px;border-top:1px dotted #777"></div><div class="a" style="left:693px;top:402px"><svg width="17" height="14" viewBox="0 0 17 14"><path d="M1 2.5 Q1 1 2.5 1 L6 1 L7.5 2.5 L12 2.5 Q13 2.5 13 3.5 L13 5 L4 5 L1 12 Z" fill="#a9cdf0" stroke="#4f86c2" stroke-width="0.8"/><path d="M4 5 L16.5 5 L13.5 13 L1 13 Z" fill="#5d9ad8" stroke="#3f74b0" stroke-width="0.8"/></svg></div><div class="tree" style="left:714px;top:399px;width:41px">QXY200</div><div class="a" style="left:670px;top:422px;width:103px;height:6px;border:1px solid #c0c0c0;background:#ececec"></div><div class="a" style="left:715px;top:421px;width:12px;height:8px;background:#ececec"></div><svg class="a" style="left:715px;top:419px" width="12" height="12"><path d="M2.5 5 L6 1.5 L9.5 5 Z M2.5 7 L6 10.5 L9.5 7 Z" fill="#c4c4c4"/></svg><div class="a" style="left:670px;top:431px;width:103px;height:18px;background:#bfbfbf;clip-path:polygon(4px 0,99px 0,103px 4px,103px 18px,0 18px,0 4px)"></div><div class="a" style="left:680px;top:433px;font:bold 12px 'Liberation Sans';color:#000">详...</div><svg class="a" style="left:756px;top:435px" width="10" height="10"><path d="M1 5 L5 1 L9 5 M1 9 L5 5 L9 9" stroke="#fff" stroke-width="1.3" fill="none"/></svg><div class="a" style="left:670px;top:449px;width:103px;height:234px;background:#f0f0f0;border:1px solid #c4c4c4;border-top:none"></div><div class="a" style="left:670px;top:695px;width:103px;height:18px;background:#bfbfbf;clip-path:polygon(4px 0,99px 0,103px 4px,103px 18px,0 18px,0 4px)"></div><div class="a" style="left:680px;top:696px;font:bold 12px 'Liberation Sans';color:#000">预览</div><svg class="a" style="left:756px;top:698px" width="10" height="10"><path d="M1 5 L5 1 L9 5 M1 9 L5 5 L9 9" stroke="#fff" stroke-width="1.3" fill="none"/></svg><div class="a" style="left:670px;top:713px;width:103px;height:165px;background:#dcdcdc;border-left:1px solid #c4c4c4;border-right:1px solid #c4c4c4"></div><div class="a" style="left:783px;top:0;width:34px;height:878px;background:#f0f0f0"></div><div class="a" style="left:787px;top:0;width:2px;height:878px;background:#888"></div><div class="a" style="left:789px;top:0;width:1px;height:878px;background:#fff"></div><div class="a" style="left:813px;top:0;width:1px;height:427px;background:#a0a0a0"></div><div class="a" style="left:790px;top:426px;width:24px;height:1px;background:#a0a0a0"></div><div class="a" style="left:792px;top:0;width:20px;height:1px;background:#a0a0a0"></div><div class="a" style="left:815px;top:0;width:2px;height:857px;background:#9a9a9a"></div><div class="a" style="left:817px;top:0;width:698px;height:843px;background:#000"></div><div class="a" style="left:817px;top:843px;width:698px;height:14px;background:#f0f0f0"></div><div class="a" style="left:789px;top:857px;width:726px;height:21px;background:#f0f0f0"></div><div class="a" style="left:789px;top:859px;width:726px;height:1px;background:#fff"></div><div class="a" style="left:789px;top:863px;width:726px;height:2px;background:#7a7a7a"></div><div class="a" style="left:789px;top:865px;width:726px;height:1px;background:#fbfbfb"></div><div class="a" style="left:795px;top:873px;width:2px;height:5px;background:#fff;border-right:1px solid #a0a0a0"></div><div class="a" style="left:799px;top:873px;width:2px;height:5px;background:#fff;border-right:1px solid #a0a0a0"></div><div class="a" style="left:806px;top:874px;width:709px;height:4px;background:#fff;border-top:1px solid #6a6a6a;border-left:1px solid #6a6a6a"></div><svg class="a" style="left:788px;top:0" width="28" height="430" viewBox="788 0 28 430"><defs><linearGradient id="lg" x1="0" y1="0" x2="1" y2="1"><stop offset="0" stop-color="#ffffff"/><stop offset="1" stop-color="#a9c3e0"/></linearGradient><linearGradient id="gg" x1="0" y1="0" x2="1" y2="1"><stop offset="0" stop-color="#1c2a6a"/><stop offset="1" stop-color="#d8cc50"/></linearGradient><pattern id="hp" width="2.5" height="2.5" patternUnits="userSpaceOnUse" patternTransform="rotate(45)"><rect width="1" height="2.5" fill="#1a3a7a"/></pattern></defs><rect x="792" y="0" width="20" height="1.5" fill="#9a9a9a"/><path d="M795.5 19 L806.5 8.5" stroke="#111" stroke-width="1.3"/><rect x="794.0" y="17.5" width="3" height="3" fill="#0a6ed8" stroke="#003a8a" stroke-width="0.4"/><rect x="805.0" y="7.0" width="3" height="3" fill="#0a6ed8" stroke="#003a8a" stroke-width="0.4"/><path d="M794 42.5 L808 28.5" stroke="#111" stroke-width="1.3"/><path d="M793 43.5 L794 38.5 L798 42.5 Z M809 27.5 L808 32.5 L804 28.5 Z" fill="#111"/><rect x="800.0" y="34.0" width="3" height="3" fill="#0a6ed8" stroke="#003a8a" stroke-width="0.4"/><path d="M794 61.5 L803.5 61.5 A3.8 3.8 0 0 0 803.5 54.5" stroke="#111" stroke-width="1.2" fill="none"/><rect x="792.5" y="60.0" width="3" height="3" fill="#0a6ed8" stroke="#003a8a" stroke-width="0.4"/><rect x="802.0" y="60.0" width="3" height="3" fill="#0a6ed8" stroke="#003a8a" stroke-width="0.4"/><rect x="802.0" y="53.0" width="3" height="3" fill="#0a6ed8" stroke="#003a8a" stroke-width="0.4"/><path d="M801 73 L808 78.3 L805.5 86 L796.5 86 L794 78.3 Z" fill="url(#lg)" stroke="#1a1a1a" stroke-width="1.1"/><path d="M794.5 98.5 L807.5 98 L807.5 105 L794.5 105.5 Z" fill="url(#lg)" stroke="#111" stroke-width="1.2"/><rect x="793.0" y="103.5" width="3" height="3" fill="#0a6ed8" stroke="#003a8a" stroke-width="0.4"/><rect x="806.0" y="96.5" width="3" height="3" fill="#0a6ed8" stroke="#003a8a" stroke-width="0.4"/><path d="M794.3 130 Q796 119 807.5 117.3" stroke="#222" stroke-width="1.2" fill="none"/><rect x="792.8" y="128.5" width="3" height="3" fill="#0a6ed8" stroke="#003a8a" stroke-width="0.4"/><rect x="797.0" y="120.0" width="3" height="3" fill="#0a6ed8" stroke="#003a8a" stroke-width="0.4"/><rect x="806.0" y="115.8" width="3" height="3" fill="#0a6ed8" stroke="#003a8a" stroke-width="0.4"/><circle cx="800.4" cy="146" r="7" fill="url(#lg)" stroke="#111" stroke-width="1.3"/><path d="M800.4 146 L805 141.5" stroke="#0a4ab0" stroke-width="1.2"/><rect x="798.9" y="144.5" width="3" height="3" fill="#0a6ed8" stroke="#003a8a" stroke-width="0.4"/><path d="M795.5 163.5 A3.8 3.8 0 0 1 801.5 159.5 A3.6 3.6 0 0 1 806.5 163 A3.3 3.3 0 0 1 807.5 169 A3.8 3.8 0 0 1 802 174.5 A3.5 3.5 0 0 1 796.5 172 A3.2 3.2 0 0 1 794.5 167.5 A2.6 2.6 0 0 1 795.5 163.5 Z" fill="url(#lg)" stroke="#111" stroke-width="1.2"/><path d="M793.5 197.5 Q794.5 189 798 190 Q801 192 804 189 Q807 187 808 184" stroke="#222" stroke-width="1.1" fill="none"/><ellipse cx="800.5" cy="212" rx="7" ry="4.3" fill="url(#lg)" stroke="#111" stroke-width="1.2"/><rect x="792.5" y="210.5" width="3" height="3" fill="#0a6ed8" stroke="#003a8a" stroke-width="0.4"/><rect x="805.5" y="210.5" width="3" height="3" fill="#0a6ed8" stroke="#003a8a" stroke-width="0.4"/><rect x="799.0" y="206.3" width="3" height="3" fill="#0a6ed8" stroke="#003a8a" stroke-width="0.4"/><path d="M794.5 234 A7 4.5 0 1 1 801 238.5" fill="url(#lg)" stroke="#333" stroke-width="1.2"/><rect x="793.0" y="232.5" width="3" height="3" fill="#0a6ed8" stroke="#003a8a" stroke-width="0.4"/><rect x="799.0" y="236.5" width="3" height="3" fill="#0a6ed8" stroke="#003a8a" stroke-width="0.4"/><path d="M799 248 L806 248 L809 251 L809 262 L799 262 Z" fill="url(#lg)" stroke="#888" stroke-width="0.6"/><path d="M809 258 L809 262 L805 262 Z" fill="#000"/><rect x="794" y="252" width="8" height="6" fill="#ece27a" stroke="#555" stroke-width="0.7"/><circle cx="801.5" cy="259" r="3.5" fill="#e8dc72" stroke="#555" stroke-width="0.7"/><rect x="792.5" y="256.5" width="3" height="3" fill="#0a6ed8" stroke="#003a8a" stroke-width="0.4"/><rect x="795" y="273" width="9" height="7" fill="#ece27a" stroke="#555" stroke-width="0.7"/><circle cx="803.5" cy="280" r="3.8" fill="#e8dc72" stroke="#555" stroke-width="0.7"/><rect x="794.0" y="278.0" width="3" height="3" fill="#0a6ed8" stroke="#003a8a" stroke-width="0.4"/><rect x="800.0" y="298.5" width="3" height="3" fill="#0a6ed8" stroke="#003a8a" stroke-width="0.4"/><rect x="795.5" y="316" width="12" height="12" fill="url(#hp)"/><path d="M793 316.5 H810 M793 327.5 H810 M796.5 313.5 V330 M806.5 313.5 V330" stroke="#1a2a5a" stroke-width="1.4"/><rect x="795.5" y="337.5" width="12" height="12" fill="url(#gg)"/><path d="M793 337.5 H810 M793 349 H810 M796.5 335 V351.5 M806.5 335 V351.5" stroke="#111" stroke-width="1.4"/><path d="M793.5 360.5 L803 360.5 L809 366 L809 372.5 L793.5 372.5 Z" fill="url(#lg)" stroke="#1a3f80" stroke-width="1.1"/><circle cx="800.5" cy="366.5" r="2.8" fill="#fff" stroke="#2a4f90" stroke-width="1"/><rect x="794" y="381" width="14" height="12.5" fill="#4a78c8" stroke="#3a5ea0" stroke-width="0.6"/><rect x="794" y="381" width="14" height="2" fill="#3a70e0"/><rect x="795.3" y="384.3" width="3" height="2" fill="#eef3fb"/><rect x="795.3" y="387.3" width="3" height="2" fill="#eef3fb"/><rect x="795.3" y="390.3" width="3" height="2" fill="#eef3fb"/><rect x="799.8" y="384.3" width="3" height="2" fill="#eef3fb"/><rect x="799.8" y="387.3" width="3" height="2" fill="#eef3fb"/><rect x="799.8" y="390.3" width="3" height="2" fill="#eef3fb"/><rect x="804.3" y="384.3" width="3" height="2" fill="#eef3fb"/><rect x="804.3" y="387.3" width="3" height="2" fill="#eef3fb"/><rect x="804.3" y="390.3" width="3" height="2" fill="#eef3fb"/><text x="801" y="415.5" font-family="Liberation Sans" font-size="16.5" fill="#000" text-anchor="middle">A</text></svg><svg class="a" style="left:817px;top:0" width="698" height="843" viewBox="817 0 698 843"><defs><pattern id="hat" width="3" height="3" patternUnits="userSpaceOnUse" patternTransform="rotate(45)"><rect width="1.2" height="3" fill="#ff00ff"/></pattern></defs><text x="935" y="66" font-family="Liberation Serif" font-size="11.5" font-weight="normal" fill="#4020f0" text-anchor="start" textLength="89" lengthAdjust="spacingAndGlyphs" stroke="#4020f0" stroke-width="0.4">Bore size:SC200</text><line x1="934" y1="79.5" x2="1515" y2="79.5" stroke="#3300cc" stroke-width="1" /><line x1="934" y1="94.5" x2="1515" y2="94.5" stroke="#3300cc" stroke-width="1" /><line x1="934" y1="108.5" x2="1515" y2="108.5" stroke="#3300cc" stroke-width="1" /><line x1="934.5" y1="79.6" x2="934.5" y2="108.8" stroke="#3300cc" stroke-width="1" /><line x1="976.5" y1="79.6" x2="976.5" y2="108.8" stroke="#3300cc" stroke-width="1" /><text x="937" y="90" font-family="Liberation Serif" font-size="11.5" font-weight="normal" fill="#4020f0" text-anchor="start" textLength="25" lengthAdjust="spacingAndGlyphs" stroke="#4020f0" stroke-width="0.4">Type</text><text x="1093.3" y="90.6" font-family="Liberation Serif" font-size="11.5" font-weight="normal" fill="#4020f0" text-anchor="start" textLength="35.6" lengthAdjust="spacingAndGlyphs" stroke="#4020f0" stroke-width="0.4">Stroke</text><text x="939.7" y="105" font-family="Liberation Serif" font-size="11" font-weight="normal" fill="#4020f0" text-anchor="start" textLength="31" lengthAdjust="spacingAndGlyphs" stroke="#4020f0" stroke-width="0.4">SC200</text><line x1="999.5" y1="94.4" x2="999.5" y2="108.8" stroke="#3300cc" stroke-width="1" /><text x="982.25" y="105" font-family="Liberation Serif" font-size="11" font-weight="normal" fill="#4020f0" text-anchor="start" textLength="12" lengthAdjust="spacingAndGlyphs" stroke="#4020f0" stroke-width="0.4">25</text><line x1="1023.5" y1="94.4" x2="1023.5" y2="108.8" stroke="#3300cc" stroke-width="1" /><text x="1005.75" y="105" font-family="Liberation Serif" font-size="11" font-weight="normal" fill="#4020f0" text-anchor="start" textLength="12" lengthAdjust="spacingAndGlyphs" stroke="#4020f0" stroke-width="0.4">50</text><line x1="1047.5" y1="94.4" x2="1047.5" y2="108.8" stroke="#3300cc" stroke-width="1" /><text x="1029.5" y="105" font-family="Liberation Serif" font-size="11" font-weight="normal" fill="#4020f0" text-anchor="start" textLength="12" lengthAdjust="spacingAndGlyphs" stroke="#4020f0" stroke-width="0.4">75</text><line x1="1071.5" y1="94.4" x2="1071.5" y2="108.8" stroke="#3300cc" stroke-width="1" /><text x="1053.5" y="105" font-family="Liberation Serif" font-size="11" font-weight="normal" fill="#4020f0" text-anchor="start" textLength="12" lengthAdjust="spacingAndGlyphs" stroke="#4020f0" stroke-width="0.4">80</text><line x1="1095.5" y1="94.4" x2="1095.5" y2="108.8" stroke="#3300cc" stroke-width="1" /><text x="1074.8" y="105" font-family="Liberation Serif" font-size="11" font-weight="normal" fill="#4020f0" text-anchor="start" textLength="17.4" lengthAdjust="spacingAndGlyphs" stroke="#4020f0" stroke-width="0.4">100</text><line x1="1119.5" y1="94.4" x2="1119.5" y2="108.8" stroke="#3300cc" stroke-width="1" /><text x="1098.8" y="105" font-family="Liberation Serif" font-size="11" font-weight="normal" fill="#4020f0" text-anchor="start" textLength="17.4" lengthAdjust="spacingAndGlyphs" stroke="#4020f0" stroke-width="0.4">125</text><line x1="1143.5" y1="94.4" x2="1143.5" y2="108.8" stroke="#3300cc" stroke-width="1" /><text x="1122.8" y="105" font-family="Liberation Serif" font-size="11" font-weight="normal" fill="#4020f0" text-anchor="start" textLength="17.4" lengthAdjust="spacingAndGlyphs" stroke="#4020f0" stroke-width="0.4">150</text><line x1="1166.5" y1="94.4" x2="1166.5" y2="108.8" stroke="#3300cc" stroke-width="1" /><text x="1146.3" y="105" font-family="Liberation Serif" font-size="11" font-weight="normal" fill="#4020f0" text-anchor="start" textLength="17.4" lengthAdjust="spacingAndGlyphs" stroke="#4020f0" stroke-width="0.4">160</text><line x1="1190.5" y1="94.4" x2="1190.5" y2="108.8" stroke="#3300cc" stroke-width="1" /><text x="1169.8" y="105" font-family="Liberation Serif" font-size="11" font-weight="normal" fill="#4020f0" text-anchor="start" textLength="17.4" lengthAdjust="spacingAndGlyphs" stroke="#4020f0" stroke-width="0.4">175</text><line x1="1214.5" y1="94.4" x2="1214.5" y2="108.8" stroke="#3300cc" stroke-width="1" /><text x="1193.8" y="105" font-family="Liberation Serif" font-size="11" font-weight="normal" fill="#4020f0" text-anchor="start" textLength="17.4" lengthAdjust="spacingAndGlyphs" stroke="#4020f0" stroke-width="0.4">200</text><line x1="1248.5" y1="94.4" x2="1248.5" y2="108.8" stroke="#3300cc" stroke-width="1" /><text x="1222.8" y="105" font-family="Liberation Serif" font-size="11" font-weight="normal" fill="#4020f0" text-anchor="start" textLength="17.4" lengthAdjust="spacingAndGlyphs" stroke="#4020f0" stroke-width="0.4">250</text><line x1="1282.5" y1="94.4" x2="1282.5" y2="108.8" stroke="#3300cc" stroke-width="1" /><text x="1256.8" y="105" font-family="Liberation Serif" font-size="11" font-weight="normal" fill="#4020f0" text-anchor="start" textLength="17.4" lengthAdjust="spacingAndGlyphs" stroke="#4020f0" stroke-width="0.4">300</text><line x1="1316.5" y1="94.4" x2="1316.5" y2="108.8" stroke="#3300cc" stroke-width="1" /><text x="1290.8" y="105" font-family="Liberation Serif" font-size="11" font-weight="normal" fill="#4020f0" text-anchor="start" textLength="17.4" lengthAdjust="spacingAndGlyphs" stroke="#4020f0" stroke-width="0.4">350</text><line x1="1350.5" y1="94.4" x2="1350.5" y2="108.8" stroke="#3300cc" stroke-width="1" /><text x="1324.8" y="105" font-family="Liberation Serif" font-size="11" font-weight="normal" fill="#4020f0" text-anchor="start" textLength="17.4" lengthAdjust="spacingAndGlyphs" stroke="#4020f0" stroke-width="0.4">400</text><line x1="1384.5" y1="94.4" x2="1384.5" y2="108.8" stroke="#3300cc" stroke-width="1" /><text x="1358.8" y="105" font-family="Liberation Serif" font-size="11" font-weight="normal" fill="#4020f0" text-anchor="start" textLength="17.4" lengthAdjust="spacingAndGlyphs" stroke="#4020f0" stroke-width="0.4">450</text><line x1="1418.5" y1="94.4" x2="1418.5" y2="108.8" stroke="#3300cc" stroke-width="1" /><text x="1392.8" y="105" font-family="Liberation Serif" font-size="11" font-weight="normal" fill="#4020f0" text-anchor="start" textLength="17.4" lengthAdjust="spacingAndGlyphs" stroke="#4020f0" stroke-width="0.4">500</text><line x1="1453.5" y1="94.4" x2="1453.5" y2="108.8" stroke="#3300cc" stroke-width="1" /><text x="1427.3" y="105" font-family="Liberation Serif" font-size="11" font-weight="normal" fill="#4020f0" text-anchor="start" textLength="17.4" lengthAdjust="spacingAndGlyphs" stroke="#4020f0" stroke-width="0.4">600</text><line x1="1488.5" y1="94.4" x2="1488.5" y2="108.8" stroke="#3300cc" stroke-width="1" /><text x="1462.3" y="105" font-family="Liberation Serif" font-size="11" font-weight="normal" fill="#4020f0" text-anchor="start" textLength="17.4" lengthAdjust="spacingAndGlyphs" stroke="#4020f0" stroke-width="0.4">700</text><line x1="1522.5" y1="94.4" x2="1522.5" y2="108.8" stroke="#3300cc" stroke-width="1" /><text x="1496.8" y="105" font-family="Liberation Serif" font-size="11" font-weight="normal" fill="#4020f0" text-anchor="start" textLength="17.4" lengthAdjust="spacingAndGlyphs" stroke="#4020f0" stroke-width="0.4">800</text><rect x="863.5" y="120.5" width="550" height="544" stroke="#3300cc" stroke-width="1.0" fill="none" rx="0"/><line x1="997.5" y1="120.5" x2="997.5" y2="664.5" stroke="#3300cc" stroke-width="1" /><line x1="863.5" y1="290.5" x2="1413.5" y2="290.5" stroke="#3300cc" stroke-width="1" /><line x1="863.5" y1="477.5" x2="1413.5" y2="477.5" stroke="#3300cc" stroke-width="1" /><text x="895.06" y="210.5" font-family="Liberation Serif" font-size="16.5" fill="#4020f0" text-anchor="middle" stroke="#4020f0" stroke-width="0.3">S</text><text x="905.19" y="210.5" font-family="Liberation Serif" font-size="16.5" fill="#4020f0" text-anchor="middle" stroke="#4020f0" stroke-width="0.3">C</text><text x="915.31" y="210.5" font-family="Liberation Serif" font-size="16.5" fill="#4020f0" text-anchor="middle" stroke="#4020f0" stroke-width="0.3">2</text><text x="925.44" y="210.5" font-family="Liberation Serif" font-size="16.5" fill="#4020f0" text-anchor="middle" stroke="#4020f0" stroke-width="0.3">5</text><text x="935.56" y="210.5" font-family="Liberation Serif" font-size="16.5" fill="#4020f0" text-anchor="middle" stroke="#4020f0" stroke-width="0.3">0</text><path d="M941.69 200.5 L949.69 209.0 M949.69 200.5 L941.69 209.0" stroke="#4020f0" stroke-width="1" fill="none" /><text x="955.81" y="210.5" font-family="Liberation Serif" font-size="16.5" fill="#4020f0" text-anchor="middle" stroke="#4020f0" stroke-width="0.3">5</text><text x="965.94" y="210.5" font-family="Liberation Serif" font-size="16.5" fill="#4020f0" text-anchor="middle" stroke="#4020f0" stroke-width="0.3">0</text><text x="889.17" y="389" font-family="Liberation Serif" font-size="16.5" fill="#4020f0" text-anchor="middle" stroke="#4020f0" stroke-width="0.3">S</text><text x="899.50" y="389" font-family="Liberation Serif" font-size="16.5" fill="#4020f0" text-anchor="middle" stroke="#4020f0" stroke-width="0.3">C</text><text x="909.83" y="389" font-family="Liberation Serif" font-size="16.5" fill="#4020f0" text-anchor="middle" stroke="#4020f0" stroke-width="0.3">D</text><text x="920.17" y="389" font-family="Liberation Serif" font-size="16.5" fill="#4020f0" text-anchor="middle" stroke="#4020f0" stroke-width="0.3">2</text><text x="930.50" y="389" font-family="Liberation Serif" font-size="16.5" fill="#4020f0" text-anchor="middle" stroke="#4020f0" stroke-width="0.3">5</text><text x="940.83" y="389" font-family="Liberation Serif" font-size="16.5" fill="#4020f0" text-anchor="middle" stroke="#4020f0" stroke-width="0.3">0</text><path d="M947.17 379 L955.17 387.5 M955.17 379 L947.17 387.5" stroke="#4020f0" stroke-width="1" fill="none" /><text x="961.50" y="389" font-family="Liberation Serif" font-size="16.5" fill="#4020f0" text-anchor="middle" stroke="#4020f0" stroke-width="0.3">5</text><text x="971.83" y="389" font-family="Liberation Serif" font-size="16.5" fill="#4020f0" text-anchor="middle" stroke="#4020f0" stroke-width="0.3">0</text><text x="874.58" y="576" font-family="Liberation Serif" font-size="16.5" fill="#4020f0" text-anchor="middle" stroke="#4020f0" stroke-width="0.3">S</text><text x="884.75" y="576" font-family="Liberation Serif" font-size="16.5" fill="#4020f0" text-anchor="middle" stroke="#4020f0" stroke-width="0.3">C</text><text x="894.92" y="576" font-family="Liberation Serif" font-size="16.5" fill="#4020f0" text-anchor="middle" stroke="#4020f0" stroke-width="0.3">J</text><text x="905.08" y="576" font-family="Liberation Serif" font-size="16.5" fill="#4020f0" text-anchor="middle" stroke="#4020f0" stroke-width="0.3">2</text><text x="915.25" y="576" font-family="Liberation Serif" font-size="16.5" fill="#4020f0" text-anchor="middle" stroke="#4020f0" stroke-width="0.3">5</text><text x="925.42" y="576" font-family="Liberation Serif" font-size="16.5" fill="#4020f0" text-anchor="middle" stroke="#4020f0" stroke-width="0.3">0</text><path d="M931.58 566 L939.58 574.5 M939.58 566 L931.58 574.5" stroke="#4020f0" stroke-width="1" fill="none" /><text x="945.75" y="576" font-family="Liberation Serif" font-size="16.5" fill="#4020f0" text-anchor="middle" stroke="#4020f0" stroke-width="0.3">5</text><text x="955.92" y="576" font-family="Liberation Serif" font-size="16.5" fill="#4020f0" text-anchor="middle" stroke="#4020f0" stroke-width="0.3">0</text><path d="M962.08 571 L970.08 571" stroke="#4020f0" stroke-width="1.8" fill="none" /><text x="976.25" y="576" font-family="Liberation Serif" font-size="16.5" fill="#4020f0" text-anchor="middle" stroke="#4020f0" stroke-width="0.3">2</text><text x="986.42" y="576" font-family="Liberation Serif" font-size="16.5" fill="#4020f0" text-anchor="middle" stroke="#4020f0" stroke-width="0.3">0</text><line x1="1011" y1="214.5" x2="1109" y2="214.5" stroke="#ff0000" stroke-width="1" stroke-dasharray="23 3 6 3 40 3 6 3 23"/><line x1="1059.5" y1="165.5" x2="1059.5" y2="263.5" stroke="#ff0000" stroke-width="1" stroke-dasharray="11 3 6 3 52 3 6 3 11"/><rect x="1014.8" y="169.3" width="90.6" height="91" stroke="#ffffff" stroke-width="1.6" fill="none" rx="6"/><path d="M1039.5 174.5 L1080.5 174.5 Q1084.5 174.5 1084.5 178.5 L1084.5 185.5 A10 10 0 0 0 1097.5 189.0 Q1100.5 189.0 1100.5 193.0 L1100.5 236.0 Q1100.5 240.0 1097.5 240.0 A10 10 0 0 0 1084.5 243.5 L1084.5 251.5 Q1084.5 255.5 1080.5 255.5 L1039.5 255.5 Q1035.5 255.5 1035.5 251.5 L1035.5 243.5 A10 10 0 0 0 1022 240.0 Q1019.5 240.0 1019.5 236.0 L1019.5 193.0 Q1019.5 189.0 1022 189.0 A10 10 0 0 0 1035.5 185.5 L1035.5 178.5 Q1035.5 174.5 1039.5 174.5 Z" stroke="#ffffff" stroke-width="1" fill="none" /><line x1="1057.5" y1="174.5" x2="1057.5" y2="198.5" stroke="#ffffff" stroke-width="1" /><line x1="1057.5" y1="230.5" x2="1057.5" y2="255.5" stroke="#ffffff" stroke-width="1" /><line x1="1061.5" y1="174.5" x2="1061.5" y2="198.5" stroke="#ffffff" stroke-width="1" /><line x1="1061.5" y1="230.5" x2="1061.5" y2="255.5" stroke="#ffffff" stroke-width="1" /><line x1="1019.5" y1="212.5" x2="1043.5" y2="212.5" stroke="#ffffff" stroke-width="1" /><line x1="1075.5" y1="212.5" x2="1100.5" y2="212.5" stroke="#ffffff" stroke-width="1" /><line x1="1019.5" y1="216.5" x2="1043.5" y2="216.5" stroke="#ffffff" stroke-width="1" /><line x1="1075.5" y1="216.5" x2="1100.5" y2="216.5" stroke="#ffffff" stroke-width="1" /><line x1="1046.63" y1="204.74" x2="1031.78" y2="189.89" stroke="#ffffff" stroke-width="1" /><line x1="1049.74" y1="201.63" x2="1034.89" y2="186.78" stroke="#ffffff" stroke-width="1" /><line x1="1049.74" y1="227.37" x2="1034.89" y2="242.22" stroke="#ffffff" stroke-width="1" /><line x1="1046.63" y1="224.26" x2="1031.78" y2="239.11" stroke="#ffffff" stroke-width="1" /><line x1="1069.26" y1="201.63" x2="1084.11" y2="186.78" stroke="#ffffff" stroke-width="1" /><line x1="1072.37" y1="204.74" x2="1087.22" y2="189.89" stroke="#ffffff" stroke-width="1" /><line x1="1072.37" y1="224.26" x2="1087.22" y2="239.11" stroke="#ffffff" stroke-width="1" /><line x1="1069.26" y1="227.37" x2="1084.11" y2="242.22" stroke="#ffffff" stroke-width="1" /><path d="M1036.21 187.71 A35.5 35.5 0 0 1 1055.79 179.19" stroke="#ffffff" stroke-width="1" fill="none" /><path d="M1063.21 179.19 A35.5 35.5 0 0 1 1082.79 187.71" stroke="#ffffff" stroke-width="1" fill="none" /><path d="M1082.79 241.29 A35.5 35.5 0 0 1 1063.21 249.81" stroke="#ffffff" stroke-width="1" fill="none" /><path d="M1055.79 249.81 A35.5 35.5 0 0 1 1036.21 241.29" stroke="#ffffff" stroke-width="1" fill="none" /><path d="M1086.69 191.68 A35.5 35.5 0 0 1 1093.07 202.94" stroke="#ffffff" stroke-width="1" fill="none" /><path d="M1093.07 226.06 A35.5 35.5 0 0 1 1086.69 237.32" stroke="#ffffff" stroke-width="1" fill="none" /><line x1="1075" y1="203.5" x2="1100.5" y2="203.5" stroke="#ffffff" stroke-width="1" /><line x1="1075" y1="227.5" x2="1100.5" y2="227.5" stroke="#ffffff" stroke-width="1" /><circle cx="1059.5" cy="214.5" r="16.2" stroke="#ffffff" stroke-width="1.3" fill="none" /><circle cx="1059.5" cy="214.5" r="14.3" stroke="#ffffff" stroke-width="1" fill="none" /><circle cx="1059.5" cy="214.5" r="11.3" stroke="#ffffff" stroke-width="1.1" fill="none" /><circle cx="1059.5" cy="214.5" r="8.3" stroke="#ffffff" stroke-width="1" fill="none" /><circle cx="1059.5" cy="214.5" r="7" stroke="#3a3aff" stroke-width="1" fill="none" stroke-dasharray="30 14"/><line x1="1050.5" y1="214.5" x2="1068.5" y2="214.5" stroke="#ff0000" stroke-width="1.2" /><line x1="1059.5" y1="205.5" x2="1059.5" y2="223.5" stroke="#ff0000" stroke-width="1.2" /><circle cx="1025.4" cy="180" r="5.6" stroke="#ffffff" stroke-width="2" fill="none" /><circle cx="1025.4" cy="180" r="3.3" stroke="#3a3aff" stroke-width="1.2" fill="none" /><line x1="1018.9" y1="180" x2="1031.9" y2="180" stroke="#ff0000" stroke-width="1.3" /><line x1="1025.4" y1="174" x2="1025.4" y2="186" stroke="#ff0000" stroke-width="1.3" /><circle cx="1025.4" cy="248.7" r="5.6" stroke="#ffffff" stroke-width="2" fill="none" /><circle cx="1025.4" cy="248.7" r="3.3" stroke="#3a3aff" stroke-width="1.2" fill="none" /><line x1="1018.9" y1="248.7" x2="1031.9" y2="248.7" stroke="#ff0000" stroke-width="1.3" /><line x1="1025.4" y1="242.7" x2="1025.4" y2="254.7" stroke="#ff0000" stroke-width="1.3" /><circle cx="1094.3" cy="180" r="5.6" stroke="#ffffff" stroke-width="2" fill="none" /><circle cx="1094.3" cy="180" r="3.3" stroke="#3a3aff" stroke-width="1.2" fill="none" /><line x1="1087.8" y1="180" x2="1100.8" y2="180" stroke="#ff0000" stroke-width="1.3" /><line x1="1094.3" y1="174" x2="1094.3" y2="186" stroke="#ff0000" stroke-width="1.3" /><circle cx="1094.3" cy="248.7" r="5.6" stroke="#ffffff" stroke-width="2" fill="none" /><circle cx="1094.3" cy="248.7" r="3.3" stroke="#3a3aff" stroke-width="1.2" fill="none" /><line x1="1087.8" y1="248.7" x2="1100.8" y2="248.7" stroke="#ff0000" stroke-width="1.3" /><line x1="1094.3" y1="242.7" x2="1094.3" y2="254.7" stroke="#ff0000" stroke-width="1.3" /><line x1="1014" y1="146.5" x2="1106" y2="146.5" stroke="#3300cc" stroke-width="1" /><line x1="1014.5" y1="146.3" x2="1014.5" y2="177.5" stroke="#3300cc" stroke-width="1" /><line x1="1105.5" y1="146.3" x2="1105.5" y2="177.5" stroke="#3300cc" stroke-width="1" /><rect x="1054" y="143.1" width="11" height="2.7" fill="#2a0ae0"/><line x1="1025" y1="154.5" x2="1095" y2="154.5" stroke="#3300cc" stroke-width="1" /><line x1="1025.5" y1="154.5" x2="1025.5" y2="174.5" stroke="#3300cc" stroke-width="1" /><line x1="1094.5" y1="154.5" x2="1094.5" y2="174.5" stroke="#3300cc" stroke-width="1" /><rect x="1054" y="151.3" width="11" height="2.7" fill="#2a0ae0"/><line x1="1048" y1="162.5" x2="1072" y2="162.5" stroke="#3300cc" stroke-width="1" /><line x1="1048.5" y1="159.5" x2="1048.5" y2="205.5" stroke="#3300cc" stroke-width="1" /><line x1="1071.5" y1="159.5" x2="1071.5" y2="205.5" stroke="#3300cc" stroke-width="1" /><rect x="1057" y="159" width="6" height="2.7" fill="#2a0ae0"/><line x1="1187" y1="214.5" x2="1312" y2="214.5" stroke="#ff0000" stroke-width="1.3" stroke-dasharray="28 3 6 3"/><line x1="1181" y1="207.5" x2="1191" y2="207.5" stroke="#3300cc" stroke-width="1" /><line x1="1181" y1="221.5" x2="1191" y2="221.5" stroke="#3300cc" stroke-width="1" /><line x1="1191" y1="207.5" x2="1218" y2="207.5" stroke="#ffffff" stroke-width="1" /><line x1="1191" y1="221.5" x2="1218" y2="221.5" stroke="#ffffff" stroke-width="1" /><line x1="1192" y1="208.5" x2="1217" y2="208.5" stroke="#2040ff" stroke-width="1" /><line x1="1192" y1="220.5" x2="1217" y2="220.5" stroke="#2040ff" stroke-width="1" /><line x1="1190.5" y1="207.5" x2="1190.5" y2="222.5" stroke="#ffffff" stroke-width="2" /><rect x="1200.5" y="201.5" width="7" height="27" stroke="#ffffff" stroke-width="1.3" fill="none" rx="3.5"/><line x1="1200.5" y1="208.5" x2="1207.5" y2="208.5" stroke="#ffffff" stroke-width="1" /><line x1="1200.5" y1="221.5" x2="1207.5" y2="221.5" stroke="#ffffff" stroke-width="1" /><rect x="1217.5" y="206.5" width="9" height="17" stroke="#ffffff" stroke-width="1.0" fill="none" rx="0"/><rect x="1219.5" y="210.5" width="5" height="7" stroke="#3030ff" stroke-width="1.0" fill="none" rx="0"/><line x1="1179.5" y1="205.5" x2="1179.5" y2="223.5" stroke="#2a0ae0" stroke-width="1" /><rect x="1176.5" y="209.5" width="2.5" height="10" fill="#2a0ae0"/><path d="M1222 218.5 L1218 226.5 L1208 228.0" stroke="#3300cc" stroke-width="1" fill="none" /><rect x="1210" y="222.3" width="8" height="2.7" fill="#2a0ae0"/><rect x="1205" y="227.3" width="17" height="2.7" fill="#2a0ae0"/><rect x="1238.5" y="169.5" width="69" height="90" stroke="#ffffff" stroke-width="1.0" fill="none" rx="0"/><line x1="1254.5" y1="169.5" x2="1254.5" y2="259.5" stroke="#ffffff" stroke-width="1" /><line x1="1291.5" y1="169.5" x2="1291.5" y2="259.5" stroke="#ffffff" stroke-width="1" /><line x1="1254" y1="170.5" x2="1292" y2="170.5" stroke="#ffffff" stroke-width="1.2" /><line x1="1254" y1="177.5" x2="1292" y2="177.5" stroke="#ffffff" stroke-width="1.2" /><line x1="1254" y1="183.5" x2="1292" y2="183.5" stroke="#ffffff" stroke-width="1.2" /><line x1="1254" y1="245.5" x2="1292" y2="245.5" stroke="#ffffff" stroke-width="1.2" /><line x1="1254" y1="252.5" x2="1292" y2="252.5" stroke="#ffffff" stroke-width="1.2" /><rect x="1226.5" y="199.5" width="11" height="31" stroke="#ffffff" stroke-width="1.0" fill="none" rx="0"/><line x1="1237.5" y1="201.5" x2="1237.5" y2="228.5" stroke="#3300cc" stroke-width="1" /><rect x="1232" y="209.5" width="4" height="4" fill="#2a0ae0"/><rect x="1232" y="215.5" width="4" height="4" fill="#2a0ae0"/><line x1="1235" y1="180.5" x2="1312" y2="180.5" stroke="#ff0000" stroke-width="1.3" stroke-dasharray="22 4 12 3 22 3 20"/><line x1="1235" y1="249.5" x2="1312" y2="249.5" stroke="#ff0000" stroke-width="1.3" stroke-dasharray="22 4 12 3 22 3 20"/><line x1="1247.5" y1="166.5" x2="1247.5" y2="216.5" stroke="#3300cc" stroke-width="1" /><line x1="1250.5" y1="166.5" x2="1250.5" y2="205.5" stroke="#3300cc" stroke-width="1" /><line x1="1296.5" y1="166.5" x2="1296.5" y2="205.5" stroke="#3300cc" stroke-width="1" /><line x1="1298.5" y1="166.5" x2="1298.5" y2="216.5" stroke="#3300cc" stroke-width="1" /><ellipse cx="1250.4" cy="207.8" rx="3.2" ry="3.5" fill="#ffffff"/><line x1="1245.4" y1="207.8" x2="1255.4" y2="207.8" stroke="#ff0000" stroke-width="1.2" /><circle cx="1247.3" cy="221.5" r="5.5" stroke="#ffffff" stroke-width="1.3" fill="none" /><line x1="1240.3" y1="221.5" x2="1254.3" y2="221.5" stroke="#ff0000" stroke-width="1.3" /><line x1="1247.3" y1="214.5" x2="1247.3" y2="228.5" stroke="#ff0000" stroke-width="1.3" /><ellipse cx="1296" cy="207.8" rx="3.2" ry="3.5" fill="#ffffff"/><line x1="1291" y1="207.8" x2="1301" y2="207.8" stroke="#ff0000" stroke-width="1.2" /><circle cx="1298.8" cy="221.5" r="5.5" stroke="#ffffff" stroke-width="1.3" fill="none" /><line x1="1291.8" y1="221.5" x2="1305.8" y2="221.5" stroke="#ff0000" stroke-width="1.3" /><line x1="1298.8" y1="214.5" x2="1298.8" y2="228.5" stroke="#ff0000" stroke-width="1.3" /><line x1="1259.5" y1="201.5" x2="1259.5" y2="223.5" stroke="#3300cc" stroke-width="1" /><line x1="1250" y1="222.5" x2="1260" y2="222.5" stroke="#3300cc" stroke-width="1" /><rect x="1256" y="209.5" width="3.5" height="5" fill="#2a0ae0"/><rect x="1256" y="215.5" width="3.5" height="5" fill="#2a0ae0"/><line x1="1286.5" y1="201.5" x2="1286.5" y2="223.5" stroke="#3300cc" stroke-width="1" /><line x1="1285" y1="205.5" x2="1296" y2="205.5" stroke="#3300cc" stroke-width="1" /><rect x="1282" y="207.5" width="3.5" height="5" fill="#2a0ae0"/><rect x="1282" y="213.5" width="3.5" height="5" fill="#2a0ae0"/><rect x="1291.5" y="239" width="16" height="5" fill="url(#hat)" stroke="#ff00ff" stroke-width="0.8"/><rect x="1291.5" y="254" width="16" height="5.5" fill="url(#hat)" stroke="#ff00ff" stroke-width="0.8"/><rect x="1302.5" y="246.5" width="4" height="6" stroke="#ffffff" stroke-width="1.0" fill="none" rx="0"/><line x1="1297.5" y1="238.5" x2="1297.5" y2="265.5" stroke="#ffffff" stroke-width="1" /><line x1="1314.5" y1="240.5" x2="1314.5" y2="282.5" stroke="#3300cc" stroke-width="1" /><line x1="1307" y1="244.5" x2="1315" y2="244.5" stroke="#3300cc" stroke-width="1" /><line x1="1307" y1="251.5" x2="1315" y2="251.5" stroke="#3300cc" stroke-width="1" /><rect x="1311.5" y="258.5" width="2.5" height="24" fill="#2a0ae0"/><path d="M1250.8 228.5 L1254.5 250.5 L1257 265.5 L1271 265.5" stroke="#3300cc" stroke-width="1" fill="none" /><rect x="1259" y="261.8" width="10" height="2.7" fill="#2a0ae0"/><line x1="1285" y1="265.5" x2="1308" y2="265.5" stroke="#3300cc" stroke-width="1" /><rect x="1286" y="261.8" width="8" height="2.7" fill="#2a0ae0"/><line x1="1307.5" y1="259.5" x2="1307.5" y2="265.5" stroke="#3300cc" stroke-width="1" /><line x1="1190" y1="146.5" x2="1307" y2="146.5" stroke="#3300cc" stroke-width="1" /><line x1="1190.5" y1="146.5" x2="1190.5" y2="207.5" stroke="#3300cc" stroke-width="1" /><line x1="1307.5" y1="146.5" x2="1307.5" y2="169.5" stroke="#3300cc" stroke-width="1" /><rect x="1236.5" y="142.3" width="24" height="2.7" fill="#2a0ae0"/><line x1="1190" y1="153.5" x2="1307" y2="153.5" stroke="#3300cc" stroke-width="1" /><rect x="1214" y="149.3" width="7" height="2.7" fill="#2a0ae0"/><rect x="1261" y="149.3" width="23" height="2.7" fill="#2a0ae0"/><line x1="1238.5" y1="153.5" x2="1238.5" y2="169.5" stroke="#3300cc" stroke-width="1" /><line x1="1307.5" y1="153.5" x2="1307.5" y2="169.5" stroke="#3300cc" stroke-width="1" /><line x1="1190" y1="160.5" x2="1254" y2="160.5" stroke="#3300cc" stroke-width="1" /><line x1="1226.5" y1="160.5" x2="1226.5" y2="199.5" stroke="#3300cc" stroke-width="1" /><rect x="1205" y="156.3" width="8" height="2.7" fill="#2a0ae0"/><rect x="1231" y="156.3" width="5" height="2.7" fill="#2a0ae0"/><rect x="1244" y="156.3" width="5" height="2.7" fill="#2a0ae0"/><line x1="1291" y1="160.5" x2="1307" y2="160.5" stroke="#3300cc" stroke-width="1" /><rect x="1296" y="156.3" width="6" height="2.7" fill="#2a0ae0"/><line x1="1225" y1="165.5" x2="1263" y2="165.5" stroke="#3300cc" stroke-width="1" /><rect x="1227" y="161.8" width="8" height="2.7" fill="#2a0ae0"/><rect x="1254" y="161.8" width="9" height="2.7" fill="#2a0ae0"/><line x1="1282" y1="165.5" x2="1320" y2="165.5" stroke="#3300cc" stroke-width="1" /><rect x="1282" y="161.8" width="6" height="2.7" fill="#2a0ae0"/><rect x="1310" y="161.8" width="10" height="2.7" fill="#2a0ae0"/><line x1="1190" y1="176.5" x2="1220" y2="176.5" stroke="#3300cc" stroke-width="1" /><line x1="1219.5" y1="176.5" x2="1219.5" y2="207.5" stroke="#3300cc" stroke-width="1" /><rect x="1202" y="172.3" width="6" height="2.7" fill="#2a0ae0"/><line x1="1200" y1="194.5" x2="1208" y2="194.5" stroke="#3300cc" stroke-width="1" /><line x1="1200.5" y1="192.5" x2="1200.5" y2="201.5" stroke="#3300cc" stroke-width="1" /><line x1="1207.5" y1="192.5" x2="1207.5" y2="201.5" stroke="#3300cc" stroke-width="1" /><rect x="1201" y="190.3" width="6" height="2.7" fill="#2a0ae0"/><line x1="1011" y1="405.5" x2="1109" y2="405.5" stroke="#ff0000" stroke-width="1" stroke-dasharray="23 3 6 3 40 3 6 3 23"/><line x1="1059.5" y1="356.5" x2="1059.5" y2="454.5" stroke="#ff0000" stroke-width="1" stroke-dasharray="11 3 6 3 52 3 6 3 11"/><rect x="1014.8" y="360.3" width="90.6" height="91" stroke="#ffffff" stroke-width="1.6" fill="none" rx="6"/><path d="M1039.5 365.5 L1080.5 365.5 Q1084.5 365.5 1084.5 369.5 L1084.5 376.5 A10 10 0 0 0 1097.5 380.0 Q1100.5 380.0 1100.5 384.0 L1100.5 427.0 Q1100.5 431.0 1097.5 431.0 A10 10 0 0 0 1084.5 434.5 L1084.5 442.5 Q1084.5 446.5 1080.5 446.5 L1039.5 446.5 Q1035.5 446.5 1035.5 442.5 L1035.5 434.5 A10 10 0 0 0 1022 431.0 Q1019.5 431.0 1019.5 427.0 L1019.5 384.0 Q1019.5 380.0 1022 380.0 A10 10 0 0 0 1035.5 376.5 L1035.5 369.5 Q1035.5 365.5 1039.5 365.5 Z" stroke="#ffffff" stroke-width="1" fill="none" /><line x1="1057.5" y1="365.5" x2="1057.5" y2="389.5" stroke="#ffffff" stroke-width="1" /><line x1="1057.5" y1="421.5" x2="1057.5" y2="446.5" stroke="#ffffff" stroke-width="1" /><line x1="1061.5" y1="365.5" x2="1061.5" y2="389.5" stroke="#ffffff" stroke-width="1" /><line x1="1061.5" y1="421.5" x2="1061.5" y2="446.5" stroke="#ffffff" stroke-width="1" /><line x1="1019.5" y1="403.5" x2="1043.5" y2="403.5" stroke="#ffffff" stroke-width="1" /><line x1="1075.5" y1="403.5" x2="1100.5" y2="403.5" stroke="#ffffff" stroke-width="1" /><line x1="1019.5" y1="407.5" x2="1043.5" y2="407.5" stroke="#ffffff" stroke-width="1" /><line x1="1075.5" y1="407.5" x2="1100.5" y2="407.5" stroke="#ffffff" stroke-width="1" /><line x1="1046.63" y1="395.74" x2="1031.78" y2="380.89" stroke="#ffffff" stroke-width="1" /><line x1="1049.74" y1="392.63" x2="1034.89" y2="377.78" stroke="#ffffff" stroke-width="1" /><line x1="1049.74" y1="418.37" x2="1034.89" y2="433.22" stroke="#ffffff" stroke-width="1" /><line x1="1046.63" y1="415.26" x2="1031.78" y2="430.11" stroke="#ffffff" stroke-width="1" /><line x1="1069.26" y1="392.63" x2="1084.11" y2="377.78" stroke="#ffffff" stroke-width="1" /><line x1="1072.37" y1="395.74" x2="1087.22" y2="380.89" stroke="#ffffff" stroke-width="1" /><line x1="1072.37" y1="415.26" x2="1087.22" y2="430.11" stroke="#ffffff" stroke-width="1" /><line x1="1069.26" y1="418.37" x2="1084.11" y2="433.22" stroke="#ffffff" stroke-width="1" /><path d="M1036.21 378.71 A35.5 35.5 0 0 1 1055.79 370.19" stroke="#ffffff" stroke-width="1" fill="none" /><path d="M1063.21 370.19 A35.5 35.5 0 0 1 1082.79 378.71" stroke="#ffffff" stroke-width="1" fill="none" /><path d="M1082.79 432.29 A35.5 35.5 0 0 1 1063.21 440.81" stroke="#ffffff" stroke-width="1" fill="none" /><path d="M1055.79 440.81 A35.5 35.5 0 0 1 1036.21 432.29" stroke="#ffffff" stroke-width="1" fill="none" /><path d="M1086.69 382.68 A35.5 35.5 0 0 1 1093.07 393.94" stroke="#ffffff" stroke-width="1" fill="none" /><path d="M1093.07 417.06 A35.5 35.5 0 0 1 1086.69 428.32" stroke="#ffffff" stroke-width="1" fill="none" /><line x1="1075" y1="394.5" x2="1100.5" y2="394.5" stroke="#ffffff" stroke-width="1" /><line x1="1075" y1="418.5" x2="1100.5" y2="418.5" stroke="#ffffff" stroke-width="1" /><circle cx="1059.5" cy="405.5" r="16.2" stroke="#ffffff" stroke-width="1.3" fill="none" /><circle cx="1059.5" cy="405.5" r="14.3" stroke="#ffffff" stroke-width="1" fill="none" /><circle cx="1059.5" cy="405.5" r="11.3" stroke="#ffffff" stroke-width="1.1" fill="none" /><circle cx="1059.5" cy="405.5" r="8.3" stroke="#ffffff" stroke-width="1" fill="none" /><circle cx="1059.5" cy="405.5" r="7" stroke="#3a3aff" stroke-width="1" fill="none" stroke-dasharray="30 14"/><line x1="1050.5" y1="405.5" x2="1068.5" y2="405.5" stroke="#ff0000" stroke-width="1.2" /><line x1="1059.5" y1="396.5" x2="1059.5" y2="414.5" stroke="#ff0000" stroke-width="1.2" /><circle cx="1025.4" cy="371" r="5.6" stroke="#ffffff" stroke-width="2" fill="none" /><circle cx="1025.4" cy="371" r="3.3" stroke="#3a3aff" stroke-width="1.2" fill="none" /><line x1="1018.9" y1="371" x2="1031.9" y2="371" stroke="#ff0000" stroke-width="1.3" /><line x1="1025.4" y1="365" x2="1025.4" y2="377" stroke="#ff0000" stroke-width="1.3" /><circle cx="1025.4" cy="439.7" r="5.6" stroke="#ffffff" stroke-width="2" fill="none" /><circle cx="1025.4" cy="439.7" r="3.3" stroke="#3a3aff" stroke-width="1.2" fill="none" /><line x1="1018.9" y1="439.7" x2="1031.9" y2="439.7" stroke="#ff0000" stroke-width="1.3" /><line x1="1025.4" y1="433.7" x2="1025.4" y2="445.7" stroke="#ff0000" stroke-width="1.3" /><circle cx="1094.3" cy="371" r="5.6" stroke="#ffffff" stroke-width="2" fill="none" /><circle cx="1094.3" cy="371" r="3.3" stroke="#3a3aff" stroke-width="1.2" fill="none" /><line x1="1087.8" y1="371" x2="1100.8" y2="371" stroke="#ff0000" stroke-width="1.3" /><line x1="1094.3" y1="365" x2="1094.3" y2="377" stroke="#ff0000" stroke-width="1.3" /><circle cx="1094.3" cy="439.7" r="5.6" stroke="#ffffff" stroke-width="2" fill="none" /><circle cx="1094.3" cy="439.7" r="3.3" stroke="#3a3aff" stroke-width="1.2" fill="none" /><line x1="1087.8" y1="439.7" x2="1100.8" y2="439.7" stroke="#ff0000" stroke-width="1.3" /><line x1="1094.3" y1="433.7" x2="1094.3" y2="445.7" stroke="#ff0000" stroke-width="1.3" /><line x1="1014" y1="337.5" x2="1106" y2="337.5" stroke="#3300cc" stroke-width="1" /><line x1="1014.5" y1="337.3" x2="1014.5" y2="368.5" stroke="#3300cc" stroke-width="1" /><line x1="1105.5" y1="337.3" x2="1105.5" y2="368.5" stroke="#3300cc" stroke-width="1" /><rect x="1054" y="334.1" width="11" height="2.7" fill="#2a0ae0"/><line x1="1025" y1="345.5" x2="1095" y2="345.5" stroke="#3300cc" stroke-width="1" /><line x1="1025.5" y1="345.5" x2="1025.5" y2="365.5" stroke="#3300cc" stroke-width="1" /><line x1="1094.5" y1="345.5" x2="1094.5" y2="365.5" stroke="#3300cc" stroke-width="1" /><rect x="1054" y="342.3" width="11" height="2.7" fill="#2a0ae0"/><line x1="1048" y1="353.5" x2="1072" y2="353.5" stroke="#3300cc" stroke-width="1" /><line x1="1048.5" y1="350.5" x2="1048.5" y2="396.5" stroke="#3300cc" stroke-width="1" /><line x1="1071.5" y1="350.5" x2="1071.5" y2="396.5" stroke="#3300cc" stroke-width="1" /><rect x="1057" y="350" width="6" height="2.7" fill="#2a0ae0"/><line x1="1187" y1="405.5" x2="1375" y2="405.5" stroke="#ff0000" stroke-width="1.3" stroke-dasharray="28 3 6 3"/><line x1="1181" y1="398.5" x2="1191" y2="398.5" stroke="#3300cc" stroke-width="1" /><line x1="1181" y1="412.5" x2="1191" y2="412.5" stroke="#3300cc" stroke-width="1" /><line x1="1191" y1="398.5" x2="1218" y2="398.5" stroke="#ffffff" stroke-width="1" /><line x1="1191" y1="412.5" x2="1218" y2="412.5" stroke="#ffffff" stroke-width="1" /><line x1="1192" y1="399.5" x2="1217" y2="399.5" stroke="#2040ff" stroke-width="1" /><line x1="1192" y1="411.5" x2="1217" y2="411.5" stroke="#2040ff" stroke-width="1" /><line x1="1190.5" y1="398.5" x2="1190.5" y2="413.5" stroke="#ffffff" stroke-width="2" /><rect x="1200.5" y="392.5" width="7" height="27" stroke="#ffffff" stroke-width="1.3" fill="none" rx="3.5"/><line x1="1200.5" y1="399.5" x2="1207.5" y2="399.5" stroke="#ffffff" stroke-width="1" /><line x1="1200.5" y1="412.5" x2="1207.5" y2="412.5" stroke="#ffffff" stroke-width="1" /><rect x="1217.5" y="397.5" width="9" height="17" stroke="#ffffff" stroke-width="1.0" fill="none" rx="0"/><rect x="1219.5" y="401.5" width="5" height="7" stroke="#3030ff" stroke-width="1.0" fill="none" rx="0"/><line x1="1179.5" y1="396.5" x2="1179.5" y2="414.5" stroke="#2a0ae0" stroke-width="1" /><rect x="1176.5" y="400.5" width="2.5" height="10" fill="#2a0ae0"/><path d="M1222 409.5 L1218 417.5 L1208 419.0" stroke="#3300cc" stroke-width="1" fill="none" /><rect x="1210" y="413.3" width="8" height="2.7" fill="#2a0ae0"/><rect x="1205" y="418.3" width="17" height="2.7" fill="#2a0ae0"/><rect x="1238.5" y="360.5" width="69" height="90" stroke="#ffffff" stroke-width="1.0" fill="none" rx="0"/><line x1="1254.5" y1="360.5" x2="1254.5" y2="450.5" stroke="#ffffff" stroke-width="1" /><line x1="1291.5" y1="360.5" x2="1291.5" y2="450.5" stroke="#ffffff" stroke-width="1" /><line x1="1254" y1="361.5" x2="1292" y2="361.5" stroke="#ffffff" stroke-width="1.2" /><line x1="1254" y1="367.5" x2="1292" y2="367.5" stroke="#ffffff" stroke-width="1.2" /><line x1="1254" y1="373.5" x2="1292" y2="373.5" stroke="#ffffff" stroke-width="1.2" /><line x1="1254" y1="436.5" x2="1292" y2="436.5" stroke="#ffffff" stroke-width="1.2" /><line x1="1254" y1="443.5" x2="1292" y2="443.5" stroke="#ffffff" stroke-width="1.2" /><rect x="1226.5" y="390.5" width="11" height="31" stroke="#ffffff" stroke-width="1.0" fill="none" rx="0"/><line x1="1237.5" y1="392.5" x2="1237.5" y2="419.5" stroke="#3300cc" stroke-width="1" /><rect x="1232" y="400.5" width="4" height="4" fill="#2a0ae0"/><rect x="1232" y="406.5" width="4" height="4" fill="#2a0ae0"/><line x1="1235" y1="371.5" x2="1312" y2="371.5" stroke="#ff0000" stroke-width="1.3" stroke-dasharray="22 4 12 3 22 3 20"/><line x1="1235" y1="440.5" x2="1312" y2="440.5" stroke="#ff0000" stroke-width="1.3" stroke-dasharray="22 4 12 3 22 3 20"/><line x1="1247.5" y1="357.5" x2="1247.5" y2="407.5" stroke="#3300cc" stroke-width="1" /><line x1="1250.5" y1="357.5" x2="1250.5" y2="396.5" stroke="#3300cc" stroke-width="1" /><line x1="1296.5" y1="357.5" x2="1296.5" y2="407.5" stroke="#3300cc" stroke-width="1" /><line x1="1298.5" y1="357.5" x2="1298.5" y2="391.5" stroke="#3300cc" stroke-width="1" /><ellipse cx="1250.4" cy="398.8" rx="3.2" ry="3.5" fill="#ffffff"/><line x1="1245.4" y1="398.8" x2="1255.4" y2="398.8" stroke="#ff0000" stroke-width="1.2" /><circle cx="1247.3" cy="412.5" r="5.5" stroke="#ffffff" stroke-width="1.3" fill="none" /><line x1="1240.3" y1="412.5" x2="1254.3" y2="412.5" stroke="#ff0000" stroke-width="1.3" /><line x1="1247.3" y1="405.5" x2="1247.3" y2="419.5" stroke="#ff0000" stroke-width="1.3" /><circle cx="1298.8" cy="397.5" r="5.5" stroke="#ffffff" stroke-width="1.3" fill="none" /><line x1="1291.8" y1="397.5" x2="1305.8" y2="397.5" stroke="#ff0000" stroke-width="1.3" /><line x1="1298.8" y1="390.5" x2="1298.8" y2="404.5" stroke="#ff0000" stroke-width="1.3" /><ellipse cx="1296" cy="412" rx="3.2" ry="3.5" fill="#ffffff"/><line x1="1291" y1="412" x2="1301" y2="412" stroke="#ff0000" stroke-width="1.2" /><line x1="1259.5" y1="392.5" x2="1259.5" y2="414.5" stroke="#3300cc" stroke-width="1" /><line x1="1250" y1="413.5" x2="1260" y2="413.5" stroke="#3300cc" stroke-width="1" /><rect x="1256" y="400.5" width="3.5" height="5" fill="#2a0ae0"/><rect x="1256" y="406.5" width="3.5" height="5" fill="#2a0ae0"/><line x1="1286.5" y1="392.5" x2="1286.5" y2="414.5" stroke="#3300cc" stroke-width="1" /><line x1="1285" y1="396.5" x2="1296" y2="396.5" stroke="#3300cc" stroke-width="1" /><rect x="1282" y="398.5" width="3.5" height="5" fill="#2a0ae0"/><rect x="1282" y="404.5" width="3.5" height="5" fill="#2a0ae0"/><rect x="1291.5" y="430" width="16" height="5" fill="url(#hat)" stroke="#ff00ff" stroke-width="0.8"/><rect x="1291.5" y="445" width="16" height="5.5" fill="url(#hat)" stroke="#ff00ff" stroke-width="0.8"/><rect x="1302.5" y="437.5" width="4" height="6" stroke="#ffffff" stroke-width="1.0" fill="none" rx="0"/><line x1="1297.5" y1="429.5" x2="1297.5" y2="456.5" stroke="#ffffff" stroke-width="1" /><line x1="1314.5" y1="431.5" x2="1314.5" y2="473.5" stroke="#3300cc" stroke-width="1" /><line x1="1307" y1="435.5" x2="1315" y2="435.5" stroke="#3300cc" stroke-width="1" /><line x1="1307" y1="442.5" x2="1315" y2="442.5" stroke="#3300cc" stroke-width="1" /><rect x="1311.5" y="449.5" width="2.5" height="24" fill="#2a0ae0"/><path d="M1250.8 419.5 L1254.5 441.5 L1257 456.5 L1271 456.5" stroke="#3300cc" stroke-width="1" fill="none" /><rect x="1259" y="452.8" width="10" height="2.7" fill="#2a0ae0"/><line x1="1285" y1="456.5" x2="1308" y2="456.5" stroke="#3300cc" stroke-width="1" /><rect x="1286" y="452.8" width="8" height="2.7" fill="#2a0ae0"/><line x1="1307.5" y1="450.5" x2="1307.5" y2="456.5" stroke="#3300cc" stroke-width="1" /><line x1="1190" y1="337.5" x2="1372" y2="337.5" stroke="#3300cc" stroke-width="1" /><line x1="1190.5" y1="337.5" x2="1190.5" y2="398.5" stroke="#3300cc" stroke-width="1" /><line x1="1372.5" y1="337.5" x2="1372.5" y2="398.5" stroke="#3300cc" stroke-width="1" /><rect x="1265.5" y="333.3" width="31" height="2.7" fill="#2a0ae0"/><line x1="1190" y1="344.5" x2="1372" y2="344.5" stroke="#3300cc" stroke-width="1" /><rect x="1214" y="340.3" width="7" height="2.7" fill="#2a0ae0"/><rect x="1261" y="340.3" width="23" height="2.7" fill="#2a0ae0"/><line x1="1238.5" y1="344.5" x2="1238.5" y2="360.5" stroke="#3300cc" stroke-width="1" /><line x1="1307.5" y1="344.5" x2="1307.5" y2="360.5" stroke="#3300cc" stroke-width="1" /><line x1="1190" y1="351.5" x2="1254" y2="351.5" stroke="#3300cc" stroke-width="1" /><line x1="1226.5" y1="351.5" x2="1226.5" y2="390.5" stroke="#3300cc" stroke-width="1" /><rect x="1205" y="347.3" width="8" height="2.7" fill="#2a0ae0"/><rect x="1231" y="347.3" width="5" height="2.7" fill="#2a0ae0"/><rect x="1244" y="347.3" width="5" height="2.7" fill="#2a0ae0"/><line x1="1291" y1="351.5" x2="1307" y2="351.5" stroke="#3300cc" stroke-width="1" /><rect x="1296" y="347.3" width="6" height="2.7" fill="#2a0ae0"/><line x1="1225" y1="356.5" x2="1263" y2="356.5" stroke="#3300cc" stroke-width="1" /><rect x="1227" y="352.8" width="8" height="2.7" fill="#2a0ae0"/><rect x="1254" y="352.8" width="9" height="2.7" fill="#2a0ae0"/><line x1="1282" y1="356.5" x2="1320" y2="356.5" stroke="#3300cc" stroke-width="1" /><rect x="1282" y="352.8" width="6" height="2.7" fill="#2a0ae0"/><rect x="1310" y="352.8" width="10" height="2.7" fill="#2a0ae0"/><line x1="1190" y1="367.5" x2="1220" y2="367.5" stroke="#3300cc" stroke-width="1" /><line x1="1219.5" y1="367.5" x2="1219.5" y2="398.5" stroke="#3300cc" stroke-width="1" /><rect x="1202" y="363.3" width="6" height="2.7" fill="#2a0ae0"/><line x1="1200" y1="385.5" x2="1208" y2="385.5" stroke="#3300cc" stroke-width="1" /><line x1="1200.5" y1="383.5" x2="1200.5" y2="392.5" stroke="#3300cc" stroke-width="1" /><line x1="1207.5" y1="383.5" x2="1207.5" y2="392.5" stroke="#3300cc" stroke-width="1" /><rect x="1201" y="381.3" width="6" height="2.7" fill="#2a0ae0"/><rect x="1307.5" y="391.5" width="12" height="29" stroke="#ffffff" stroke-width="1.0" fill="none" rx="0"/><line x1="1312.5" y1="391.5" x2="1312.5" y2="420.5" stroke="#3300cc" stroke-width="1" /><rect x="1309" y="401.5" width="3" height="8" fill="#2a0ae0"/><rect x="1314" y="402.5" width="3" height="7" fill="#2a0ae0"/><line x1="1319.5" y1="351.5" x2="1319.5" y2="391.5" stroke="#3300cc" stroke-width="1" /><rect x="1319.5" y="397.5" width="25" height="17" stroke="#ffffff" stroke-width="1.0" fill="none" rx="0"/><line x1="1318.5" y1="397.5" x2="1318.5" y2="414.5" stroke="#3300cc" stroke-width="1" /><rect x="1336.5" y="402.5" width="7" height="7" stroke="#ffffff" stroke-width="1.0" fill="none" rx="2.5"/><path d="M1338 403.5 L1342 407.5 M1342 403.5 L1338 407.5" stroke="#3030ff" stroke-width="0.8" fill="none" /><line x1="1344" y1="398.5" x2="1373" y2="398.5" stroke="#2040ff" stroke-width="1" /><line x1="1344" y1="412.5" x2="1373" y2="412.5" stroke="#2040ff" stroke-width="1" /><line x1="1344.5" y1="398" x2="1344.5" y2="413.5" stroke="#ffffff" stroke-width="2" /><line x1="1372.5" y1="398.5" x2="1372.5" y2="413.5" stroke="#ffffff" stroke-width="2" /><rect x="1355.5" y="393.5" width="9" height="25" stroke="#ffffff" stroke-width="1.3" fill="none" rx="4"/><line x1="1355.5" y1="399.5" x2="1364" y2="399.5" stroke="#ffffff" stroke-width="1" /><line x1="1355.5" y1="412.5" x2="1364" y2="412.5" stroke="#ffffff" stroke-width="1" /><line x1="1381.5" y1="396.5" x2="1381.5" y2="414.5" stroke="#2a0ae0" stroke-width="1.2" /><rect x="1378.5" y="399.5" width="4" height="12" fill="#2a0ae0"/><line x1="1372" y1="397.5" x2="1381" y2="397.5" stroke="#3300cc" stroke-width="1" /><line x1="1372" y1="414.5" x2="1381" y2="414.5" stroke="#3300cc" stroke-width="1" /><line x1="1344.5" y1="351.5" x2="1344.5" y2="397.5" stroke="#3300cc" stroke-width="1" /><line x1="1372.5" y1="337.5" x2="1372.5" y2="398.5" stroke="#3300cc" stroke-width="1" /><line x1="1355" y1="385.5" x2="1364" y2="385.5" stroke="#3300cc" stroke-width="1" /><rect x="1357" y="381.3" width="6" height="2.7" fill="#2a0ae0"/><line x1="1344" y1="367.5" x2="1372" y2="367.5" stroke="#3300cc" stroke-width="1" /><rect x="1355" y="363.8" width="6" height="2.7" fill="#2a0ae0"/><rect x="1325" y="340.3" width="20" height="2.7" fill="#2a0ae0"/><rect x="1330" y="347.3" width="20" height="2.7" fill="#2a0ae0"/><line x1="1307" y1="351.5" x2="1372" y2="351.5" stroke="#3300cc" stroke-width="1" /><path d="M1340 409.5 L1343 421.5 L1356 421.5" stroke="#3300cc" stroke-width="1" fill="none" /><rect x="1348" y="417.3" width="6" height="2.7" fill="#2a0ae0"/><rect x="1341" y="422.5" width="17" height="3" fill="#2a0ae0"/><line x1="1011" y1="582.5" x2="1109" y2="582.5" stroke="#ff0000" stroke-width="1" stroke-dasharray="23 3 6 3 40 3 6 3 23"/><line x1="1059.5" y1="533.5" x2="1059.5" y2="631.5" stroke="#ff0000" stroke-width="1" stroke-dasharray="11 3 6 3 52 3 6 3 11"/><rect x="1014.8" y="537.3" width="90.6" height="91" stroke="#ffffff" stroke-width="1.6" fill="none" rx="6"/><path d="M1039.5 542.5 L1080.5 542.5 Q1084.5 542.5 1084.5 546.5 L1084.5 553.5 A10 10 0 0 0 1097.5 557.0 Q1100.5 557.0 1100.5 561.0 L1100.5 604.0 Q1100.5 608.0 1097.5 608.0 A10 10 0 0 0 1084.5 611.5 L1084.5 619.5 Q1084.5 623.5 1080.5 623.5 L1039.5 623.5 Q1035.5 623.5 1035.5 619.5 L1035.5 611.5 A10 10 0 0 0 1022 608.0 Q1019.5 608.0 1019.5 604.0 L1019.5 561.0 Q1019.5 557.0 1022 557.0 A10 10 0 0 0 1035.5 553.5 L1035.5 546.5 Q1035.5 542.5 1039.5 542.5 Z" stroke="#ffffff" stroke-width="1" fill="none" /><line x1="1057.5" y1="542.5" x2="1057.5" y2="566.5" stroke="#ffffff" stroke-width="1" /><line x1="1057.5" y1="598.5" x2="1057.5" y2="623.5" stroke="#ffffff" stroke-width="1" /><line x1="1061.5" y1="542.5" x2="1061.5" y2="566.5" stroke="#ffffff" stroke-width="1" /><line x1="1061.5" y1="598.5" x2="1061.5" y2="623.5" stroke="#ffffff" stroke-width="1" /><line x1="1019.5" y1="580.5" x2="1043.5" y2="580.5" stroke="#ffffff" stroke-width="1" /><line x1="1075.5" y1="580.5" x2="1100.5" y2="580.5" stroke="#ffffff" stroke-width="1" /><line x1="1019.5" y1="584.5" x2="1043.5" y2="584.5" stroke="#ffffff" stroke-width="1" /><line x1="1075.5" y1="584.5" x2="1100.5" y2="584.5" stroke="#ffffff" stroke-width="1" /><line x1="1046.63" y1="572.74" x2="1031.78" y2="557.89" stroke="#ffffff" stroke-width="1" /><line x1="1049.74" y1="569.63" x2="1034.89" y2="554.78" stroke="#ffffff" stroke-width="1" /><line x1="1049.74" y1="595.37" x2="1034.89" y2="610.22" stroke="#ffffff" stroke-width="1" /><line x1="1046.63" y1="592.26" x2="1031.78" y2="607.11" stroke="#ffffff" stroke-width="1" /><line x1="1069.26" y1="569.63" x2="1084.11" y2="554.78" stroke="#ffffff" stroke-width="1" /><line x1="1072.37" y1="572.74" x2="1087.22" y2="557.89" stroke="#ffffff" stroke-width="1" /><line x1="1072.37" y1="592.26" x2="1087.22" y2="607.11" stroke="#ffffff" stroke-width="1" /><line x1="1069.26" y1="595.37" x2="1084.11" y2="610.22" stroke="#ffffff" stroke-width="1" /><path d="M1036.21 555.71 A35.5 35.5 0 0 1 1055.79 547.19" stroke="#ffffff" stroke-width="1" fill="none" /><path d="M1063.21 547.19 A35.5 35.5 0 0 1 1082.79 555.71" stroke="#ffffff" stroke-width="1" fill="none" /><path d="M1082.79 609.29 A35.5 35.5 0 0 1 1063.21 617.81" stroke="#ffffff" stroke-width="1" fill="none" /><path d="M1055.79 617.81 A35.5 35.5 0 0 1 1036.21 609.29" stroke="#ffffff" stroke-width="1" fill="none" /><path d="M1086.69 559.68 A35.5 35.5 0 0 1 1093.07 570.94" stroke="#ffffff" stroke-width="1" fill="none" /><path d="M1093.07 594.06 A35.5 35.5 0 0 1 1086.69 605.32" stroke="#ffffff" stroke-width="1" fill="none" /><line x1="1075" y1="571.5" x2="1100.5" y2="571.5" stroke="#ffffff" stroke-width="1" /><line x1="1075" y1="595.5" x2="1100.5" y2="595.5" stroke="#ffffff" stroke-width="1" /><circle cx="1059.5" cy="582.5" r="16.2" stroke="#ffffff" stroke-width="1.3" fill="none" /><circle cx="1059.5" cy="582.5" r="14.3" stroke="#ffffff" stroke-width="1" fill="none" /><circle cx="1059.5" cy="582.5" r="11.3" stroke="#ffffff" stroke-width="1.1" fill="none" /><circle cx="1059.5" cy="582.5" r="8.3" stroke="#ffffff" stroke-width="1" fill="none" /><circle cx="1059.5" cy="582.5" r="7" stroke="#3a3aff" stroke-width="1" fill="none" stroke-dasharray="30 14"/><line x1="1050.5" y1="582.5" x2="1068.5" y2="582.5" stroke="#ff0000" stroke-width="1.2" /><line x1="1059.5" y1="573.5" x2="1059.5" y2="591.5" stroke="#ff0000" stroke-width="1.2" /><circle cx="1025.4" cy="548" r="5.6" stroke="#ffffff" stroke-width="2" fill="none" /><circle cx="1025.4" cy="548" r="3.3" stroke="#3a3aff" stroke-width="1.2" fill="none" /><line x1="1018.9" y1="548" x2="1031.9" y2="548" stroke="#ff0000" stroke-width="1.3" /><line x1="1025.4" y1="542" x2="1025.4" y2="554" stroke="#ff0000" stroke-width="1.3" /><circle cx="1025.4" cy="616.7" r="5.6" stroke="#ffffff" stroke-width="2" fill="none" /><circle cx="1025.4" cy="616.7" r="3.3" stroke="#3a3aff" stroke-width="1.2" fill="none" /><line x1="1018.9" y1="616.7" x2="1031.9" y2="616.7" stroke="#ff0000" stroke-width="1.3" /><line x1="1025.4" y1="610.7" x2="1025.4" y2="622.7" stroke="#ff0000" stroke-width="1.3" /><circle cx="1094.3" cy="548" r="5.6" stroke="#ffffff" stroke-width="2" fill="none" /><circle cx="1094.3" cy="548" r="3.3" stroke="#3a3aff" stroke-width="1.2" fill="none" /><line x1="1087.8" y1="548" x2="1100.8" y2="548" stroke="#ff0000" stroke-width="1.3" /><line x1="1094.3" y1="542" x2="1094.3" y2="554" stroke="#ff0000" stroke-width="1.3" /><circle cx="1094.3" cy="616.7" r="5.6" stroke="#ffffff" stroke-width="2" fill="none" /><circle cx="1094.3" cy="616.7" r="3.3" stroke="#3a3aff" stroke-width="1.2" fill="none" /><line x1="1087.8" y1="616.7" x2="1100.8" y2="616.7" stroke="#ff0000" stroke-width="1.3" /><line x1="1094.3" y1="610.7" x2="1094.3" y2="622.7" stroke="#ff0000" stroke-width="1.3" /><line x1="1014" y1="514.5" x2="1106" y2="514.5" stroke="#3300cc" stroke-width="1" /><line x1="1014.5" y1="514.3" x2="1014.5" y2="545.5" stroke="#3300cc" stroke-width="1" /><line x1="1105.5" y1="514.3" x2="1105.5" y2="545.5" stroke="#3300cc" stroke-width="1" /><rect x="1054" y="511.1" width="11" height="2.7" fill="#2a0ae0"/><line x1="1025" y1="522.5" x2="1095" y2="522.5" stroke="#3300cc" stroke-width="1" /><line x1="1025.5" y1="522.5" x2="1025.5" y2="542.5" stroke="#3300cc" stroke-width="1" /><line x1="1094.5" y1="522.5" x2="1094.5" y2="542.5" stroke="#3300cc" stroke-width="1" /><rect x="1054" y="519.3" width="11" height="2.7" fill="#2a0ae0"/><line x1="1048" y1="530.5" x2="1072" y2="530.5" stroke="#3300cc" stroke-width="1" /><line x1="1048.5" y1="527.5" x2="1048.5" y2="573.5" stroke="#3300cc" stroke-width="1" /><line x1="1071.5" y1="527.5" x2="1071.5" y2="573.5" stroke="#3300cc" stroke-width="1" /><rect x="1057" y="527" width="6" height="2.7" fill="#2a0ae0"/><line x1="1187" y1="582.5" x2="1375" y2="582.5" stroke="#ff0000" stroke-width="1.3" stroke-dasharray="28 3 6 3"/><line x1="1181" y1="575.5" x2="1191" y2="575.5" stroke="#3300cc" stroke-width="1" /><line x1="1181" y1="589.5" x2="1191" y2="589.5" stroke="#3300cc" stroke-width="1" /><line x1="1191" y1="575.5" x2="1218" y2="575.5" stroke="#ffffff" stroke-width="1" /><line x1="1191" y1="589.5" x2="1218" y2="589.5" stroke="#ffffff" stroke-width="1" /><line x1="1192" y1="576.5" x2="1217" y2="576.5" stroke="#2040ff" stroke-width="1" /><line x1="1192" y1="588.5" x2="1217" y2="588.5" stroke="#2040ff" stroke-width="1" /><line x1="1190.5" y1="575.5" x2="1190.5" y2="590.5" stroke="#ffffff" stroke-width="2" /><rect x="1200.5" y="569.5" width="7" height="27" stroke="#ffffff" stroke-width="1.3" fill="none" rx="3.5"/><line x1="1200.5" y1="576.5" x2="1207.5" y2="576.5" stroke="#ffffff" stroke-width="1" /><line x1="1200.5" y1="589.5" x2="1207.5" y2="589.5" stroke="#ffffff" stroke-width="1" /><rect x="1217.5" y="574.5" width="9" height="17" stroke="#ffffff" stroke-width="1.0" fill="none" rx="0"/><rect x="1219.5" y="578.5" width="5" height="7" stroke="#3030ff" stroke-width="1.0" fill="none" rx="0"/><line x1="1179.5" y1="573.5" x2="1179.5" y2="591.5" stroke="#2a0ae0" stroke-width="1" /><rect x="1176.5" y="577.5" width="2.5" height="10" fill="#2a0ae0"/><path d="M1222 586.5 L1218 594.5 L1208 596.0" stroke="#3300cc" stroke-width="1" fill="none" /><rect x="1210" y="590.3" width="8" height="2.7" fill="#2a0ae0"/><rect x="1205" y="595.3" width="17" height="2.7" fill="#2a0ae0"/><rect x="1238.5" y="537.5" width="69" height="90" stroke="#ffffff" stroke-width="1.0" fill="none" rx="0"/><line x1="1254.5" y1="537.5" x2="1254.5" y2="627.5" stroke="#ffffff" stroke-width="1" /><line x1="1291.5" y1="537.5" x2="1291.5" y2="627.5" stroke="#ffffff" stroke-width="1" /><line x1="1254" y1="538.5" x2="1292" y2="538.5" stroke="#ffffff" stroke-width="1.2" /><line x1="1254" y1="545.5" x2="1292" y2="545.5" stroke="#ffffff" stroke-width="1.2" /><line x1="1254" y1="551.5" x2="1292" y2="551.5" stroke="#ffffff" stroke-width="1.2" /><line x1="1254" y1="613.5" x2="1292" y2="613.5" stroke="#ffffff" stroke-width="1.2" /><line x1="1254" y1="620.5" x2="1292" y2="620.5" stroke="#ffffff" stroke-width="1.2" /><rect x="1226.5" y="567.5" width="11" height="31" stroke="#ffffff" stroke-width="1.0" fill="none" rx="0"/><line x1="1237.5" y1="569.5" x2="1237.5" y2="596.5" stroke="#3300cc" stroke-width="1" /><rect x="1232" y="577.5" width="4" height="4" fill="#2a0ae0"/><rect x="1232" y="583.5" width="4" height="4" fill="#2a0ae0"/><line x1="1235" y1="548.5" x2="1312" y2="548.5" stroke="#ff0000" stroke-width="1.3" stroke-dasharray="22 4 12 3 22 3 20"/><line x1="1235" y1="617.5" x2="1312" y2="617.5" stroke="#ff0000" stroke-width="1.3" stroke-dasharray="22 4 12 3 22 3 20"/><line x1="1247.5" y1="534.5" x2="1247.5" y2="584.5" stroke="#3300cc" stroke-width="1" /><line x1="1250.5" y1="534.5" x2="1250.5" y2="573.5" stroke="#3300cc" stroke-width="1" /><line x1="1296.5" y1="534.5" x2="1296.5" y2="584.5" stroke="#3300cc" stroke-width="1" /><line x1="1298.5" y1="534.5" x2="1298.5" y2="568.5" stroke="#3300cc" stroke-width="1" /><ellipse cx="1250.4" cy="575.8" rx="3.2" ry="3.5" fill="#ffffff"/><line x1="1245.4" y1="575.8" x2="1255.4" y2="575.8" stroke="#ff0000" stroke-width="1.2" /><circle cx="1247.3" cy="589.5" r="5.5" stroke="#ffffff" stroke-width="1.3" fill="none" /><line x1="1240.3" y1="589.5" x2="1254.3" y2="589.5" stroke="#ff0000" stroke-width="1.3" /><line x1="1247.3" y1="582.5" x2="1247.3" y2="596.5" stroke="#ff0000" stroke-width="1.3" /><circle cx="1298.8" cy="574.5" r="5.5" stroke="#ffffff" stroke-width="1.3" fill="none" /><line x1="1291.8" y1="574.5" x2="1305.8" y2="574.5" stroke="#ff0000" stroke-width="1.3" /><line x1="1298.8" y1="567.5" x2="1298.8" y2="581.5" stroke="#ff0000" stroke-width="1.3" /><ellipse cx="1296" cy="589" rx="3.2" ry="3.5" fill="#ffffff"/><line x1="1291" y1="589" x2="1301" y2="589" stroke="#ff0000" stroke-width="1.2" /><line x1="1259.5" y1="569.5" x2="1259.5" y2="591.5" stroke="#3300cc" stroke-width="1" /><line x1="1250" y1="590.5" x2="1260" y2="590.5" stroke="#3300cc" stroke-width="1" /><rect x="1256" y="577.5" width="3.5" height="5" fill="#2a0ae0"/><rect x="1256" y="583.5" width="3.5" height="5" fill="#2a0ae0"/><line x1="1286.5" y1="569.5" x2="1286.5" y2="591.5" stroke="#3300cc" stroke-width="1" /><line x1="1285" y1="573.5" x2="1296" y2="573.5" stroke="#3300cc" stroke-width="1" /><rect x="1282" y="575.5" width="3.5" height="5" fill="#2a0ae0"/><rect x="1282" y="581.5" width="3.5" height="5" fill="#2a0ae0"/><rect x="1291.5" y="607" width="16" height="5" fill="url(#hat)" stroke="#ff00ff" stroke-width="0.8"/><rect x="1291.5" y="622" width="16" height="5.5" fill="url(#hat)" stroke="#ff00ff" stroke-width="0.8"/><rect x="1302.5" y="614.5" width="4" height="6" stroke="#ffffff" stroke-width="1.0" fill="none" rx="0"/><line x1="1297.5" y1="606.5" x2="1297.5" y2="633.5" stroke="#ffffff" stroke-width="1" /><line x1="1314.5" y1="608.5" x2="1314.5" y2="650.5" stroke="#3300cc" stroke-width="1" /><line x1="1307" y1="612.5" x2="1315" y2="612.5" stroke="#3300cc" stroke-width="1" /><line x1="1307" y1="619.5" x2="1315" y2="619.5" stroke="#3300cc" stroke-width="1" /><rect x="1311.5" y="626.5" width="2.5" height="24" fill="#2a0ae0"/><path d="M1250.8 596.5 L1254.5 618.5 L1257 633.5 L1271 633.5" stroke="#3300cc" stroke-width="1" fill="none" /><rect x="1259" y="629.8" width="10" height="2.7" fill="#2a0ae0"/><line x1="1285" y1="633.5" x2="1308" y2="633.5" stroke="#3300cc" stroke-width="1" /><rect x="1286" y="629.8" width="8" height="2.7" fill="#2a0ae0"/><line x1="1307.5" y1="627.5" x2="1307.5" y2="633.5" stroke="#3300cc" stroke-width="1" /><line x1="1190" y1="514.5" x2="1370" y2="514.5" stroke="#3300cc" stroke-width="1" /><line x1="1190.5" y1="514.5" x2="1190.5" y2="575.5" stroke="#3300cc" stroke-width="1" /><line x1="1370.5" y1="514.5" x2="1370.5" y2="575.5" stroke="#3300cc" stroke-width="1" /><rect x="1255" y="510.3" width="50" height="2.7" fill="#2a0ae0"/><line x1="1190" y1="521.5" x2="1370" y2="521.5" stroke="#3300cc" stroke-width="1" /><rect x="1214" y="517.3" width="7" height="2.7" fill="#2a0ae0"/><rect x="1261" y="517.3" width="23" height="2.7" fill="#2a0ae0"/><line x1="1238.5" y1="521.5" x2="1238.5" y2="537.5" stroke="#3300cc" stroke-width="1" /><line x1="1307.5" y1="521.5" x2="1307.5" y2="537.5" stroke="#3300cc" stroke-width="1" /><line x1="1190" y1="528.5" x2="1254" y2="528.5" stroke="#3300cc" stroke-width="1" /><line x1="1226.5" y1="528.5" x2="1226.5" y2="567.5" stroke="#3300cc" stroke-width="1" /><rect x="1205" y="524.3" width="8" height="2.7" fill="#2a0ae0"/><rect x="1231" y="524.3" width="5" height="2.7" fill="#2a0ae0"/><rect x="1244" y="524.3" width="5" height="2.7" fill="#2a0ae0"/><line x1="1291" y1="528.5" x2="1307" y2="528.5" stroke="#3300cc" stroke-width="1" /><rect x="1296" y="524.3" width="6" height="2.7" fill="#2a0ae0"/><line x1="1225" y1="533.5" x2="1263" y2="533.5" stroke="#3300cc" stroke-width="1" /><rect x="1227" y="529.8" width="8" height="2.7" fill="#2a0ae0"/><rect x="1254" y="529.8" width="9" height="2.7" fill="#2a0ae0"/><line x1="1282" y1="533.5" x2="1320" y2="533.5" stroke="#3300cc" stroke-width="1" /><rect x="1282" y="529.8" width="6" height="2.7" fill="#2a0ae0"/><rect x="1310" y="529.8" width="10" height="2.7" fill="#2a0ae0"/><line x1="1190" y1="544.5" x2="1220" y2="544.5" stroke="#3300cc" stroke-width="1" /><line x1="1219.5" y1="544.5" x2="1219.5" y2="575.5" stroke="#3300cc" stroke-width="1" /><rect x="1202" y="540.3" width="6" height="2.7" fill="#2a0ae0"/><line x1="1200" y1="562.5" x2="1208" y2="562.5" stroke="#3300cc" stroke-width="1" /><line x1="1200.5" y1="560.5" x2="1200.5" y2="569.5" stroke="#3300cc" stroke-width="1" /><line x1="1207.5" y1="560.5" x2="1207.5" y2="569.5" stroke="#3300cc" stroke-width="1" /><rect x="1201" y="558.3" width="6" height="2.7" fill="#2a0ae0"/><rect x="1307.5" y="568.5" width="12" height="29" stroke="#ffffff" stroke-width="1.0" fill="none" rx="0"/><line x1="1312.5" y1="568.5" x2="1312.5" y2="597.5" stroke="#3300cc" stroke-width="1" /><rect x="1309" y="578.5" width="3" height="8" fill="#2a0ae0"/><rect x="1314" y="579.5" width="3" height="7" fill="#2a0ae0"/><line x1="1319.5" y1="528.5" x2="1319.5" y2="568.5" stroke="#3300cc" stroke-width="1" /><rect x="1319.5" y="574.5" width="10" height="18" stroke="#ffffff" stroke-width="1.0" fill="none" rx="0"/><line x1="1318.5" y1="574.5" x2="1318.5" y2="591.5" stroke="#3300cc" stroke-width="1" /><rect x="1329.5" y="570.5" width="28" height="25" stroke="#ffffff" stroke-width="1.3" fill="none" rx="0"/><line x1="1334.5" y1="570.5" x2="1334.5" y2="594.5" stroke="#ffffff" stroke-width="2" /><rect x="1357.5" y="570.5" width="7" height="25" stroke="#ffffff" stroke-width="1.3" fill="none" rx="2"/><line x1="1357" y1="578.5" x2="1364" y2="578.5" stroke="#ffffff" stroke-width="1" /><line x1="1357" y1="587.5" x2="1364" y2="587.5" stroke="#ffffff" stroke-width="1" /><rect x="1352" y="573.5" width="3" height="4" fill="#3030ff"/><rect x="1352" y="580.5" width="3" height="6" fill="#3030ff"/><rect x="1352" y="590.5" width="3" height="4" fill="#3030ff"/><line x1="1364" y1="575.5" x2="1371" y2="575.5" stroke="#2040ff" stroke-width="1" /><line x1="1364" y1="589.5" x2="1371" y2="589.5" stroke="#2040ff" stroke-width="1" /><line x1="1370.5" y1="575.5" x2="1370.5" y2="590.5" stroke="#ffffff" stroke-width="2" /><line x1="1381.5" y1="573.5" x2="1381.5" y2="591.5" stroke="#2a0ae0" stroke-width="1.2" /><rect x="1378.5" y="575.5" width="4" height="14" fill="#2a0ae0"/><line x1="1370" y1="574.5" x2="1381" y2="574.5" stroke="#3300cc" stroke-width="1" /><line x1="1370" y1="591.5" x2="1381" y2="591.5" stroke="#3300cc" stroke-width="1" /><line x1="1329" y1="553.5" x2="1364" y2="553.5" stroke="#3300cc" stroke-width="1" /><line x1="1329.5" y1="553.5" x2="1329.5" y2="570.5" stroke="#3300cc" stroke-width="1" /><line x1="1363.5" y1="553.5" x2="1363.5" y2="570.5" stroke="#3300cc" stroke-width="1" /><rect x="1334" y="549.8" width="26" height="2.7" fill="#2a0ae0"/><line x1="1356" y1="563.5" x2="1364" y2="563.5" stroke="#3300cc" stroke-width="1" /><line x1="1356.5" y1="563" x2="1356.5" y2="570.5" stroke="#3300cc" stroke-width="1" /><rect x="1358" y="559.3" width="5" height="2.7" fill="#2a0ae0"/><rect x="1325" y="517.3" width="40" height="2.7" fill="#2a0ae0"/><rect x="1335" y="524.3" width="20" height="2.7" fill="#2a0ae0"/><line x1="1307" y1="528.5" x2="1320" y2="528.5" stroke="#3300cc" stroke-width="1" /><line x1="841.5" y1="733" x2="841.5" y2="808" stroke="#ffffff" stroke-width="1" /><path d="M841.5 714 L834.5 733.5 L848.5 733.5 Z" stroke="#ffffff" stroke-width="1" fill="#404040" /><path d="M835 680 L843.3 690 L851.6 680 M843.3 690 L843.3 700" stroke="#ffffff" stroke-width="1" fill="none" /><rect x="834.5" y="808.5" width="14" height="15" stroke="#ffffff" stroke-width="1.0" fill="none" rx="0"/><line x1="848" y1="815.5" x2="921" y2="815.5" stroke="#ffffff" stroke-width="1" /><path d="M921.5 807.5 L942 815.5 L921.5 823.5 Z" stroke="#ffffff" stroke-width="1" fill="#404040" /><path d="M958.5 806 L975 826 M975 806 L958.5 826" stroke="#ffffff" stroke-width="1" fill="none" /><text x="1422.5" y="820" font-family="Liberation Sans" font-size="20" font-weight="normal" fill="#858585" text-anchor="start" >激活 Windows</text><text x="1423" y="841" font-family="Liberation Sans" font-size="13" font-weight="normal" fill="#7c7c7c" text-anchor="start" >转到“设置”以激活 Windows</text></svg><div class="a" style="left:817px;top:843px;width:17px;height:14px;background:#f0f0f0;border-right:1px solid #c8c8c8;border-bottom:1px solid #a0a0a0"></div><div class="a" style="left:835px;top:843px;width:17px;height:14px;background:#f0f0f0;border-right:1px solid #c8c8c8;border-bottom:1px solid #a0a0a0"></div><div class="a" style="left:853px;top:843px;width:17px;height:14px;background:#f0f0f0;border-right:1px solid #c8c8c8;border-bottom:1px solid #a0a0a0"></div><div class="a" style="left:871px;top:843px;width:17px;height:14px;background:#f0f0f0;border-right:1px solid #c8c8c8;border-bottom:1px solid #a0a0a0"></div><svg class="a" style="left:817px;top:843px" width="230" height="15" viewBox="817 843 230 15">
<path d="M822 846 V855" stroke="#000" stroke-width="1.6"/><path d="M828.5 845.5 L823.5 850.5 L828.5 855.5 Z" fill="#000"/>
<path d="M846 845.5 L840.8 850.5 L846 855.5 Z" fill="#000"/>
<path d="M859 845.5 L864.2 850.5 L859 855.5 Z" fill="#000"/>
<path d="M877 845.5 L882 850.5 L877 855.5 Z" fill="#000"/><path d="M884 846 V855" stroke="#000" stroke-width="1.6"/>
<path d="M892 843 L896.5 857 L926 857 L930.5 843 Z" fill="#000" stroke="#777" stroke-width="0.8"/>
<path d="M931.5 843 L935.5 856.5 L980.5 856.5 L984.5 843" fill="#f8f8f8" stroke="#000" stroke-width="1"/>
<path d="M985.5 843 L989.5 856.5 L1034.5 856.5 L1038.5 843" fill="#f8f8f8" stroke="#000" stroke-width="1"/>
<text x="899" y="854.5" font-family="Liberation Sans" font-size="12" fill="#fff">模型</text>
<text x="936" y="854" font-family="Liberation Serif" font-size="11.5" fill="#000" stroke="#000" stroke-width="0.3" textLength="40">Layout1</text>
<text x="990" y="854" font-family="Liberation Serif" font-size="11.5" fill="#000" stroke="#000" stroke-width="0.3" textLength="41">Layout2</text>
</svg><svg class="a" style="left:1481px;top:804px" width="34" height="36" viewBox="0 0 34 36"><g transform="rotate(-18 18 18)"><rect x="4" y="5" width="28" height="26" rx="6" fill="#f25a1c" fill-opacity="0.93"/><path d="M24 12 Q18 9 12 12 Q9 15 15 17 Q23 19 20 23.5 Q14 27 9 24" stroke="#fff" stroke-width="3.6" fill="none" stroke-linecap="round"/></g></svg></body></html>
